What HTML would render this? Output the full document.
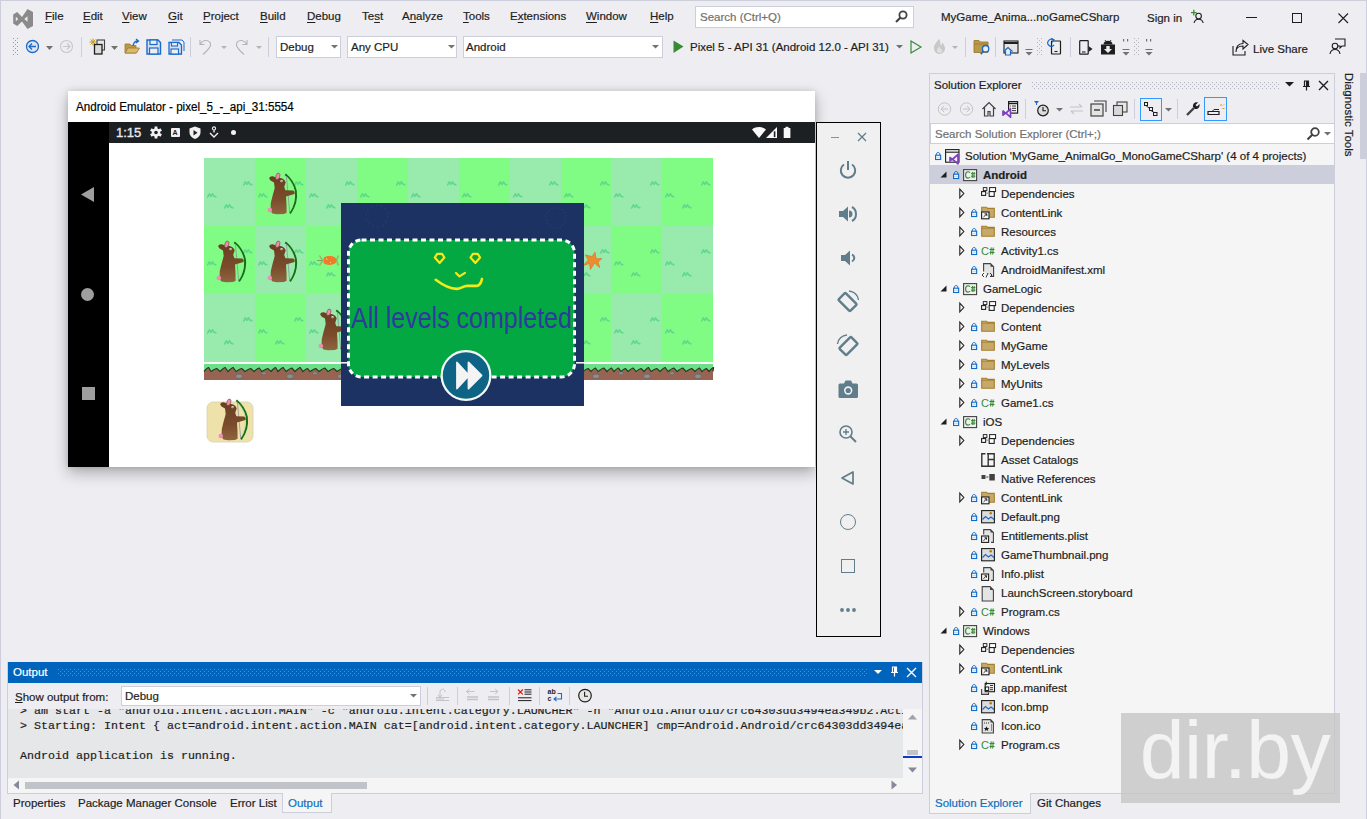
<!DOCTYPE html>
<html><head><meta charset="utf-8">
<style>
*{margin:0;padding:0;box-sizing:border-box}
html,body{width:1367px;height:819px;overflow:hidden;background:#EEEEF2;font-family:"Liberation Sans",sans-serif;font-size:11.5px;color:#1E1E1E}
.a{position:absolute}
.t{position:absolute;white-space:nowrap;line-height:14px;-webkit-text-stroke:0.2px currentColor}
svg{position:absolute;overflow:visible}
u{text-decoration:underline;text-decoration-thickness:1px;text-underline-offset:1.5px}
</style></head><body>
<div class="a" style="left:0;top:0;width:1367px;height:819px;border-left:1px solid #CCCEDB;border-top:1px solid #CCCEDB;border-right:1px solid #CCCEDB"></div>

<!-- MENU BAR -->
<div id="menubar">
<svg style="left:0;top:0" width="40" height="35"><path fill="#8A8A8A" fill-rule="evenodd" d="M13.2,14.6 L17.2,12.1 L22,17 L27.5,8.9 L33,12.1 L33,26 L27.5,29 L22,21.5 L17.2,26 L13.2,23.4 Z M15.8,16.8 L18.2,19 L15.8,21.2 Z M27.5,16.2 L24.3,19 L27.5,21.8 Z"/></svg>
<div class="t" style="left:45px;top:9px"><u>F</u>ile</div>
<div class="t" style="left:83px;top:9px"><u>E</u>dit</div>
<div class="t" style="left:122px;top:9px"><u>V</u>iew</div>
<div class="t" style="left:168px;top:9px"><u>G</u>it</div>
<div class="t" style="left:203px;top:9px"><u>P</u>roject</div>
<div class="t" style="left:260px;top:9px"><u>B</u>uild</div>
<div class="t" style="left:307px;top:9px"><u>D</u>ebug</div>
<div class="t" style="left:362px;top:9px">Te<u>s</u>t</div>
<div class="t" style="left:402px;top:9px">A<u>n</u>alyze</div>
<div class="t" style="left:463px;top:9px"><u>T</u>ools</div>
<div class="t" style="left:510px;top:9px">E<u>x</u>tensions</div>
<div class="t" style="left:586px;top:9px"><u>W</u>indow</div>
<div class="t" style="left:650px;top:9px"><u>H</u>elp</div>
<div class="a" style="left:695px;top:6px;width:219px;height:22px;background:#fff;border:1px solid #CCCEDB"></div>
<div class="t" style="left:700px;top:10px;color:#717171">Search (Ctrl+Q)</div>
<svg style="left:893px;top:9px" width="16" height="16"><circle cx="10" cy="6" r="3.6" fill="none" stroke="#424242" stroke-width="1.8"/><path d="M7.5,8.5 L3,13" stroke="#424242" stroke-width="2.2"/></svg>
<div class="t" style="left:941px;top:10px">MyGame_Anima...noGameCSharp</div>
<div class="t" style="left:1147px;top:11px">Sign in</div>
<svg style="left:1188px;top:6px" width="20" height="20"><path d="M3,6.6 H8.6 M5.8,3.8 V9.4" stroke="#388A34" stroke-width="1.3"/><circle cx="10.6" cy="10" r="2.8" fill="#EEEEF2" stroke="#1E1E1E" stroke-width="1.1"/><path d="M6,17 C6.6,14.3 8.4,13.2 10.6,13.2 C12.8,13.2 14.6,14.3 15.2,17" fill="none" stroke="#1E1E1E" stroke-width="1.1"/></svg>
<div class="a" style="left:1246px;top:17px;width:11px;height:1px;background:#1E1E1E"></div>
<div class="a" style="left:1292px;top:13px;width:10px;height:10px;border:1px solid #1E1E1E"></div>
<svg style="left:1338px;top:13px" width="11" height="11"><path d="M0.5,0.5 L10,10 M10,0.5 L0.5,10" stroke="#1E1E1E" stroke-width="1.1"/></svg>
</div>

<!-- TOOLBAR -->
<div id="toolbar">
<svg style="left:12px;top:37px" width="8" height="20"><g fill="#999"><rect x="1" y="1" width="1" height="1"/><rect x="5" y="1" width="1" height="1"/><rect x="3" y="3" width="1" height="1"/><rect x="1" y="5" width="1" height="1"/><rect x="5" y="5" width="1" height="1"/><rect x="3" y="7" width="1" height="1"/><rect x="1" y="9" width="1" height="1"/><rect x="5" y="9" width="1" height="1"/><rect x="3" y="11" width="1" height="1"/><rect x="1" y="13" width="1" height="1"/><rect x="5" y="13" width="1" height="1"/><rect x="3" y="15" width="1" height="1"/><rect x="1" y="17" width="1" height="1"/><rect x="5" y="17" width="1" height="1"/></g></svg>
<!-- back -->
<svg style="left:25px;top:39px" width="16" height="16"><circle cx="7.5" cy="7.5" r="6" fill="#DEE4F0" stroke="#1B6AC9" stroke-width="1.3"/><path d="M4,7.5 H11 M7,4.5 L4,7.5 L7,10.5" fill="none" stroke="#1B6AC9" stroke-width="1.3"/></svg>
<svg style="left:46px;top:46px" width="8" height="5"><path d="M0,0 H7 L3.5,4 Z" fill="#717171"/></svg>
<svg style="left:59px;top:39px" width="16" height="16"><circle cx="7.5" cy="7.5" r="6" fill="none" stroke="#C8C8C8" stroke-width="1.1"/><path d="M4,7.5 H11 M8,4.5 L11,7.5 L8,10.5" fill="none" stroke="#C8C8C8" stroke-width="1.1"/></svg>
<div class="a" style="left:81px;top:37px;width:1px;height:20px;background:#CCCEDB"></div>
<!-- new project -->
<svg style="left:89px;top:38px" width="18" height="18"><path d="M4,0.5 V7.5 M0.5,4 H7.5 M1.5,1.5 L6.5,6.5 M6.5,1.5 L1.5,6.5" stroke="#C69A1A" stroke-width="1"/><rect x="8" y="2" width="7.5" height="10" fill="#E8E8E8" stroke="#424242" stroke-width="1.1"/><rect x="5.5" y="6.5" width="7.5" height="9.5" fill="#DCDCDC" stroke="#1E1E1E" stroke-width="1.3"/></svg>
<svg style="left:111px;top:46px" width="8" height="5"><path d="M0,0 H7 L3.5,4 Z" fill="#717171"/></svg>
<!-- open -->
<svg style="left:124px;top:38px" width="17" height="17"><path d="M1,6 H6 L7,7.5 H12 V15 H1 Z" fill="#B99849" stroke="#9A7A2E" stroke-width="0.8"/><path d="M1,15 L4,10 H15.5 L12.5,15 Z" fill="#D9B96A" stroke="#9A7A2E" stroke-width="0.8"/><path d="M9,8 C9.5,4.5 11,3 14,3 M12,1 L14.5,3 L12,5" fill="none" stroke="#1B6AC9" stroke-width="1.3"/></svg>
<!-- save -->
<svg style="left:146px;top:39px" width="16" height="16"><path d="M1,1 H12 L14.5,3.5 V15 H1 Z" fill="#D8E1EE" stroke="#1B6AC9" stroke-width="1.4"/><rect x="4" y="1" width="7" height="4.5" fill="#EEEEF2" stroke="#1B6AC9" stroke-width="1.2"/><rect x="3.5" y="9" width="8.5" height="6" fill="#EEEEF2" stroke="#1B6AC9" stroke-width="1.2"/></svg>
<svg style="left:168px;top:39px" width="17" height="16"><path d="M4,1 H14 L16,3 V12" fill="none" stroke="#1B6AC9" stroke-width="1"/><path d="M1,3.5 H11 L13.5,6 V15 H1 Z" fill="#D8E1EE" stroke="#1B6AC9" stroke-width="1.3"/><rect x="3.5" y="3.5" width="6" height="3.5" fill="#EEEEF2" stroke="#1B6AC9" stroke-width="1.1"/><rect x="3" y="10" width="7.5" height="5" fill="#EEEEF2" stroke="#1B6AC9" stroke-width="1.1"/></svg>
<div class="a" style="left:190px;top:37px;width:1px;height:20px;background:#CCCEDB"></div>
<!-- undo/redo -->
<svg style="left:199px;top:39px" width="15" height="16"><path d="M1,1 V5.5 H5.5 M1.5,5 C3,2.5 5,1.5 7,1.5 C10,1.5 12,3.5 11.5,6.5 C11,8 9,11 4,15.5" fill="none" stroke="#B4B4B4" stroke-width="1.1"/></svg>
<svg style="left:221px;top:46px" width="6" height="4"><path d="M0,0 H6 L3,3 Z" fill="#B4B4B4"/></svg>
<svg style="left:234px;top:39px" width="15" height="16"><path d="M13,1 V5.5 H8.5 M12.5,5 C11,2.5 9,1.5 7,1.5 C4,1.5 2,3.5 2.5,6.5 C3,8 5,11 10,15.5" fill="none" stroke="#B4B4B4" stroke-width="1.1"/></svg>
<svg style="left:256px;top:46px" width="6" height="4"><path d="M0,0 H6 L3,3 Z" fill="#B4B4B4"/></svg>
<div class="a" style="left:268px;top:37px;width:1px;height:20px;background:#CCCEDB"></div>
<!-- combos -->
<div class="a" style="left:276px;top:36px;width:65px;height:22px;background:#fff;border:1px solid #CCCEDB"></div>
<div class="t" style="left:280px;top:40px">Debug</div>
<svg style="left:331px;top:45px" width="7" height="4"><path d="M0,0 H7 L3.5,3.5 Z" fill="#717171"/></svg>
<div class="a" style="left:347px;top:36px;width:110px;height:22px;background:#fff;border:1px solid #CCCEDB"></div>
<div class="t" style="left:351px;top:40px">Any CPU</div>
<svg style="left:448px;top:45px" width="7" height="4"><path d="M0,0 H7 L3.5,3.5 Z" fill="#717171"/></svg>
<div class="a" style="left:463px;top:36px;width:200px;height:22px;background:#fff;border:1px solid #CCCEDB"></div>
<div class="t" style="left:466px;top:40px">Android</div>
<svg style="left:652px;top:45px" width="7" height="4"><path d="M0,0 H7 L3.5,3.5 Z" fill="#717171"/></svg>
<svg style="left:673px;top:40px" width="11" height="14"><path d="M0.5,0.5 L10.5,6.5 L0.5,13 Z" fill="#388A34"/></svg>
<div class="t" style="left:690px;top:40px">Pixel 5 - API 31 (Android 12.0 - API 31)</div>
<svg style="left:896px;top:45px" width="7" height="4"><path d="M0,0 H7 L3.5,3.5 Z" fill="#717171"/></svg>
<svg style="left:910px;top:40px" width="12" height="14"><path d="M1,1 L11,7 L1,13 Z" fill="none" stroke="#388A34" stroke-width="1.2"/></svg>
<svg style="left:932px;top:38px" width="15" height="17"><path d="M7,1 C5,4 2,6 2,10 C2,13.5 4.5,16 7.5,16 C10.5,16 13,13.5 13,10.5 C13,7.5 11,6.5 11,4.5 C9.5,5.5 9.5,7 9,8 C8,6 9,3 7,1 Z" fill="#C8C8C8"/><path d="M5,12 C5,10 7,9 7.5,8.5 C8,11 10,11 10,13 C10,14.5 9,15 7.5,15 C6,15 5,14 5,12Z" fill="#E0E0E0"/></svg>
<svg style="left:952px;top:46px" width="6" height="4"><path d="M0,0 H6 L3,3 Z" fill="#B4B4B4"/></svg>
<div class="a" style="left:965px;top:37px;width:1px;height:20px;background:#CCCEDB"></div>
<svg style="left:973px;top:39px" width="18" height="18"><path d="M1,1.5 H6 L7.5,3 H15 V13.5 H1 Z" fill="#B99849" stroke="#9A7A2E" stroke-width="0.9"/><path d="M1,5 H15" stroke="#9A7A2E" stroke-width="0.8"/><circle cx="12.6" cy="9.7" r="3.2" fill="#EEEEF2" stroke="#1B6AC9" stroke-width="1.3"/><path d="M10.4,12 L7.8,15.3" stroke="#1B6AC9" stroke-width="1.6"/></svg>
<div class="a" style="left:995px;top:37px;width:1px;height:20px;background:#CCCEDB"></div>
<svg style="left:1003px;top:40px" width="17" height="16"><rect x="1" y="1" width="14" height="12" fill="#E4E4E4" stroke="#1E1E1E" stroke-width="1.1"/><path d="M1,3 H15" stroke="#1E1E1E" stroke-width="2"/><path d="M0.5,11.5 L5,7.5 L9.5,11.5" fill="none" stroke="#1B6AC9" stroke-width="1.3"/><path d="M2.5,10.5 V15 H7.5 V10.5" fill="#EEEEF2" stroke="#1B6AC9" stroke-width="1.2"/></svg>
<svg style="left:1025px;top:49px" width="8" height="8"><path d="M0.5,0.5 H7.5" stroke="#717171"/><path d="M0.5,3 H7.5 L4,6.5 Z" fill="#717171"/></svg>
<svg style="left:1036px;top:37px" width="8" height="20"><g fill="#B4B4B4"><rect x="1" y="1" width="1" height="1"/><rect x="5" y="1" width="1" height="1"/><rect x="3" y="3" width="1" height="1"/><rect x="1" y="5" width="1" height="1"/><rect x="5" y="5" width="1" height="1"/><rect x="3" y="7" width="1" height="1"/><rect x="1" y="9" width="1" height="1"/><rect x="5" y="9" width="1" height="1"/><rect x="3" y="11" width="1" height="1"/><rect x="1" y="13" width="1" height="1"/><rect x="5" y="13" width="1" height="1"/><rect x="3" y="15" width="1" height="1"/><rect x="1" y="17" width="1" height="1"/><rect x="5" y="17" width="1" height="1"/></g></svg>
<svg style="left:1047px;top:38px" width="16" height="18"><rect x="4.5" y="3" width="9" height="13" rx="0.5" fill="none" stroke="#1E1E1E" stroke-width="1.2"/><path d="M7.5,13.5 H10.5" stroke="#1E1E1E" stroke-width="1.1"/><path d="M6.5,2 A3.5,3.5 0 1 0 7,7" fill="none" stroke="#1B6AC9" stroke-width="1.2"/><path d="M4.2,0.3 L7.2,2 L5,4.5" fill="none" stroke="#1B6AC9" stroke-width="1.1"/></svg>
<div class="a" style="left:1070px;top:37px;width:1px;height:20px;background:#CCCEDB"></div>
<svg style="left:1079px;top:40px" width="16" height="16"><rect x="0.7" y="0.7" width="8.5" height="13.5" rx="0.5" fill="none" stroke="#1E1E1E" stroke-width="1.2"/><path d="M3,12 H6.5" stroke="#1E1E1E" stroke-width="1.1"/><path d="M9.5,6 L13.5,9 L9.5,12 Z" fill="#1E1E1E"/></svg>
<svg style="left:1100px;top:39px" width="17" height="17"><path d="M5,1 L6,2.5 M11,1 L10,2.5" stroke="#1E1E1E" stroke-width="0.9"/><path d="M3.5,5.5 C3.5,3 5.5,1.8 8,1.8 C10.5,1.8 12.5,3 12.5,5.5 Z" fill="#1E1E1E"/><path d="M1,5.5 H15 V15.5 H1 Z" fill="#1E1E1E"/><path d="M6.3,7 H9.7 V10 H12 L8,14 L4,10 H6.3 Z" fill="#EEEEF2"/></svg>
<svg style="left:1122px;top:38px" width="9" height="19"><g fill="#717171"><rect x="1" y="1" width="1.2" height="2.5"/><rect x="5" y="1" width="1.2" height="2.5"/></g><path d="M0.5,11.5 H7.5" stroke="#717171"/><path d="M0.5,14 H7.5 L4,17.5 Z" fill="#717171"/></svg>
<svg style="left:1133px;top:37px" width="8" height="20"><g fill="#B4B4B4"><rect x="1" y="1" width="1" height="1"/><rect x="5" y="1" width="1" height="1"/><rect x="3" y="3" width="1" height="1"/><rect x="1" y="5" width="1" height="1"/><rect x="5" y="5" width="1" height="1"/><rect x="3" y="7" width="1" height="1"/><rect x="1" y="9" width="1" height="1"/><rect x="5" y="9" width="1" height="1"/><rect x="3" y="11" width="1" height="1"/><rect x="1" y="13" width="1" height="1"/><rect x="5" y="13" width="1" height="1"/><rect x="3" y="15" width="1" height="1"/><rect x="1" y="17" width="1" height="1"/><rect x="5" y="17" width="1" height="1"/></g></svg>
<svg style="left:1145px;top:38px" width="9" height="19"><g fill="#717171"><rect x="1" y="1" width="1.2" height="2.5"/><rect x="5" y="1" width="1.2" height="2.5"/></g><path d="M0.5,11.5 H7.5" stroke="#717171"/><path d="M0.5,14 H7.5 L4,17.5 Z" fill="#717171"/></svg>
<!-- live share -->
<svg style="left:1232px;top:40px" width="17" height="16"><path d="M1,6 V15 H13 V11" fill="none" stroke="#1E1E1E" stroke-width="1.1"/><path d="M4,12 C4,8 7,6 11,6 V9 L16,4.5 L11,0.5 V3.5 C6,3.5 4,7 4,12 Z" fill="none" stroke="#1E1E1E" stroke-width="1.1"/></svg>
<div class="t" style="left:1253px;top:42px">Live Share</div>
<svg style="left:1329px;top:38px" width="18" height="18"><path d="M6,1 H16 V8 H13 L11,10 V8 H9" fill="none" stroke="#1E1E1E" stroke-width="1.1"/><circle cx="6" cy="8" r="2.8" fill="#EEEEF2" stroke="#1E1E1E" stroke-width="1.1"/><path d="M1,16 C1.5,13 3,11.5 6,11.5 C9,11.5 10.5,13 11,16" fill="none" stroke="#1E1E1E" stroke-width="1.1"/></svg>
</div>

<!-- EMULATOR -->
<div id="emu">
<div class="a" style="left:68px;top:91px;width:747px;height:376px;background:#fff;box-shadow:0 6px 14px rgba(0,0,0,0.28), 0 0 6px rgba(0,0,0,0.12)"></div>
<div class="t" style="left:76px;top:100px;color:#000;font-size:12.5px;transform-origin:0 0;transform:scaleX(0.93)">Android Emulator - pixel_5_-_api_31:5554</div>
<div class="a" style="left:68px;top:122px;width:747px;height:345px;background:#000"></div>
<div class="a" style="left:109px;top:122px;width:706px;height:21px;background:#1D2023"></div>
<div class="a" style="left:109px;top:143px;width:706px;height:324px;background:#fff"></div>
<svg style="left:80px;top:186px" width="16" height="18"><path d="M1,8.5 L14,1 V16 Z" fill="#9E9E9E"/></svg>
<div class="a" style="left:81px;top:288px;width:13px;height:13px;border-radius:50%;background:#9E9E9E"></div>
<div class="a" style="left:82px;top:387px;width:13px;height:13px;background:#9E9E9E"></div>
<div class="t" style="left:116px;top:126px;color:#E8EAED;font-size:13px;-webkit-text-stroke:0.35px #E8EAED">1:15</div>
<svg style="left:149px;top:126px" width="14" height="14"><g transform="translate(7,6.5)"><circle r="4.2" fill="#F1F1F1"/><g fill="#F1F1F1"><rect x="-1.4" y="-6" width="2.8" height="12"/><rect x="-1.4" y="-6" width="2.8" height="12" transform="rotate(60)"/><rect x="-1.4" y="-6" width="2.8" height="12" transform="rotate(120)"/></g><circle r="1.8" fill="#1D2023"/></g></svg>
<div class="a" style="left:171px;top:128px;width:9px;height:9px;background:#F1F1F1;border-radius:1px"></div>
<div class="t" style="left:172.5px;top:128px;font-size:7px;line-height:9px;color:#1D2023;font-weight:bold;-webkit-text-stroke:0">A</div>
<svg style="left:188px;top:126px" width="14" height="14"><path d="M7,0.5 L12.5,2.5 V6.5 C12.5,9.5 10,12 7,13 C4,12 1.5,9.5 1.5,6.5 V2.5 Z" fill="#F1F1F1"/><path d="M5.5,4 L9.5,6.8 L5.5,9.5 Z" fill="#1D2023"/></svg>
<svg style="left:208px;top:126px" width="12" height="14"><circle cx="6" cy="2.5" r="1.6" fill="none" stroke="#F1F1F1" stroke-width="1.1"/><path d="M6,4.5 V6.5 M2,7 L6,11 L10,7" fill="none" stroke="#F1F1F1" stroke-width="1.4"/></svg>
<div class="a" style="left:231px;top:130px;width:5px;height:5px;border-radius:50%;background:#F1F1F1"></div>
<svg style="left:750px;top:126px" width="44" height="15"><path d="M2,3.5 C6,0.3 12,0.3 16,3.5 L9,12 Z" fill="#F8F8F8"/><path d="M16,12 L27,1 V12 Z" fill="#F8F8F8"/><rect x="23.8" y="5.3" width="1.6" height="5.8" fill="#1D2023"/><rect x="33.7" y="2" width="6.7" height="10" rx="0.6" fill="#F8F8F8"/><rect x="35.5" y="0.8" width="3" height="1.6" fill="#F8F8F8"/></svg>
<!--GAME-->
<svg style="left:0;top:0" width="1367" height="819">
<defs>
<g id="tuft"><path d="M0.7,4 L2.3,0.8 L3.8,3.3 L5.3,0.8 L6.8,3 L8.8,3.8" fill="none" stroke="#5FD98B" stroke-width="1.6" stroke-linecap="round" stroke-linejoin="round"/></g>
<linearGradient id="fur" x1="0" y1="0" x2="0" y2="1"><stop offset="0" stop-color="#6A3E20"/><stop offset="0.6" stop-color="#7A4C2C"/><stop offset="1" stop-color="#8F6440"/></linearGradient>
<g id="rab">
<path d="M30.3,13.2 C36,18 39.5,24 40.8,30 C41.8,37 39.5,46 35,52.4" fill="none" stroke="#137018" stroke-width="2"/><path d="M31.5,15.5 C36,20 38.5,25 39.3,30.5 C40,37 38.5,45 35,50.5" fill="none" stroke="#A8E8A0" stroke-width="0.7"/>
<path d="M31.4,15 L34.7,51.7" stroke="#8A8A9A" stroke-width="0.7"/>
<path d="M14.2,17.5 C14.5,15.5 16.5,15 18.5,15.5 L21,16.5 L24.5,16.8 C27,17 29.5,18.5 30.7,21.2 L29.2,26 L30.5,29.3 L38,29.5 C39.5,29.8 40,31.5 39.5,33 L31,35.5 L31.5,44 L31.6,51.7 L29,53.1 L22,53.3 L17.5,52.5 L15.5,50 L15.8,42 L17.5,35 L19.7,27 L19,21.5 L15.5,19.5 Z" fill="url(#fur)"/>
<ellipse cx="22.8" cy="15.3" rx="1.9" ry="3.4" transform="rotate(18 22.8 15.3)" fill="#EE8DB5" stroke="#7A4526" stroke-width="0.6"/>
<circle cx="14.8" cy="49" r="2.3" fill="#EE8DB5"/>
<circle cx="26.6" cy="20.1" r="1.2" fill="#EEE"/><circle cx="26.9" cy="20.3" r="0.5" fill="#333"/>
</g>
</defs>
<rect x="204" y="158" width="51" height="68" fill="#98EAAD"/>
<rect x="255" y="158" width="51" height="68" fill="#80FB84"/>
<rect x="306" y="158" width="51" height="68" fill="#98EAAD"/>
<rect x="357" y="158" width="51" height="68" fill="#80FB84"/>
<rect x="408" y="158" width="51" height="68" fill="#98EAAD"/>
<rect x="459" y="158" width="51" height="68" fill="#80FB84"/>
<rect x="510" y="158" width="51" height="68" fill="#98EAAD"/>
<rect x="561" y="158" width="50" height="68" fill="#80FB84"/>
<rect x="611" y="158" width="51" height="68" fill="#98EAAD"/>
<rect x="662" y="158" width="51" height="68" fill="#80FB84"/>
<rect x="204" y="226" width="51" height="68" fill="#80FB84"/>
<rect x="255" y="226" width="51" height="68" fill="#98EAAD"/>
<rect x="306" y="226" width="51" height="68" fill="#80FB84"/>
<rect x="357" y="226" width="51" height="68" fill="#98EAAD"/>
<rect x="408" y="226" width="51" height="68" fill="#80FB84"/>
<rect x="459" y="226" width="51" height="68" fill="#98EAAD"/>
<rect x="510" y="226" width="51" height="68" fill="#80FB84"/>
<rect x="561" y="226" width="50" height="68" fill="#98EAAD"/>
<rect x="611" y="226" width="51" height="68" fill="#80FB84"/>
<rect x="662" y="226" width="51" height="68" fill="#98EAAD"/>
<rect x="204" y="294" width="51" height="68" fill="#98EAAD"/>
<rect x="255" y="294" width="51" height="68" fill="#80FB84"/>
<rect x="306" y="294" width="51" height="68" fill="#98EAAD"/>
<rect x="357" y="294" width="51" height="68" fill="#80FB84"/>
<rect x="408" y="294" width="51" height="68" fill="#98EAAD"/>
<rect x="459" y="294" width="51" height="68" fill="#80FB84"/>
<rect x="510" y="294" width="51" height="68" fill="#98EAAD"/>
<rect x="561" y="294" width="50" height="68" fill="#80FB84"/>
<rect x="611" y="294" width="51" height="68" fill="#98EAAD"/>
<rect x="662" y="294" width="51" height="68" fill="#80FB84"/>
<use href="#tuft" x="243" y="181"/><use href="#tuft" x="207" y="193"/><use href="#tuft" x="224" y="204"/>
<use href="#tuft" x="294" y="181"/><use href="#tuft" x="258" y="193"/><use href="#tuft" x="275" y="204"/>
<use href="#tuft" x="345" y="181"/><use href="#tuft" x="309" y="193"/><use href="#tuft" x="326" y="204"/>
<use href="#tuft" x="396" y="181"/><use href="#tuft" x="360" y="193"/><use href="#tuft" x="377" y="204"/>
<use href="#tuft" x="447" y="181"/><use href="#tuft" x="411" y="193"/><use href="#tuft" x="428" y="204"/>
<use href="#tuft" x="498" y="181"/><use href="#tuft" x="462" y="193"/><use href="#tuft" x="479" y="204"/>
<use href="#tuft" x="549" y="181"/><use href="#tuft" x="513" y="193"/><use href="#tuft" x="530" y="204"/>
<use href="#tuft" x="600" y="181"/><use href="#tuft" x="564" y="193"/><use href="#tuft" x="581" y="204"/>
<use href="#tuft" x="650" y="181"/><use href="#tuft" x="614" y="193"/><use href="#tuft" x="631" y="204"/>
<use href="#tuft" x="701" y="181"/><use href="#tuft" x="665" y="193"/><use href="#tuft" x="682" y="204"/>
<use href="#tuft" x="243" y="249"/><use href="#tuft" x="207" y="261"/><use href="#tuft" x="224" y="272"/>
<use href="#tuft" x="294" y="249"/><use href="#tuft" x="258" y="261"/><use href="#tuft" x="275" y="272"/>
<use href="#tuft" x="345" y="249"/><use href="#tuft" x="309" y="261"/><use href="#tuft" x="326" y="272"/>
<use href="#tuft" x="396" y="249"/><use href="#tuft" x="360" y="261"/><use href="#tuft" x="377" y="272"/>
<use href="#tuft" x="447" y="249"/><use href="#tuft" x="411" y="261"/><use href="#tuft" x="428" y="272"/>
<use href="#tuft" x="498" y="249"/><use href="#tuft" x="462" y="261"/><use href="#tuft" x="479" y="272"/>
<use href="#tuft" x="549" y="249"/><use href="#tuft" x="513" y="261"/><use href="#tuft" x="530" y="272"/>
<use href="#tuft" x="600" y="249"/><use href="#tuft" x="564" y="261"/><use href="#tuft" x="581" y="272"/>
<use href="#tuft" x="650" y="249"/><use href="#tuft" x="614" y="261"/><use href="#tuft" x="631" y="272"/>
<use href="#tuft" x="701" y="249"/><use href="#tuft" x="665" y="261"/><use href="#tuft" x="682" y="272"/>
<use href="#tuft" x="243" y="317"/><use href="#tuft" x="207" y="329"/><use href="#tuft" x="224" y="340"/>
<use href="#tuft" x="294" y="317"/><use href="#tuft" x="258" y="329"/><use href="#tuft" x="275" y="340"/>
<use href="#tuft" x="345" y="317"/><use href="#tuft" x="309" y="329"/><use href="#tuft" x="326" y="340"/>
<use href="#tuft" x="396" y="317"/><use href="#tuft" x="360" y="329"/><use href="#tuft" x="377" y="340"/>
<use href="#tuft" x="447" y="317"/><use href="#tuft" x="411" y="329"/><use href="#tuft" x="428" y="340"/>
<use href="#tuft" x="498" y="317"/><use href="#tuft" x="462" y="329"/><use href="#tuft" x="479" y="340"/>
<use href="#tuft" x="549" y="317"/><use href="#tuft" x="513" y="329"/><use href="#tuft" x="530" y="340"/>
<use href="#tuft" x="600" y="317"/><use href="#tuft" x="564" y="329"/><use href="#tuft" x="581" y="340"/>
<use href="#tuft" x="650" y="317"/><use href="#tuft" x="614" y="329"/><use href="#tuft" x="631" y="340"/>
<use href="#tuft" x="701" y="317"/><use href="#tuft" x="665" y="329"/><use href="#tuft" x="682" y="340"/>
<rect x="204" y="362" width="509" height="2" fill="#FAFAFA"/>
<rect x="204" y="364" width="509" height="9" fill="#6CDF8B"/>
<path d="M204,371.5 Q207.5,367.5 208.6,367.5 L211.0,371.5 Q215.5,368.5 216.8,368.5 L220.0,371.5 Q224.0,367.5 225.2,367.5 L228.0,371.5 Q232.0,367.5 233.2,367.5 L236.0,371.5 Q240.5,368.5 241.8,368.5 L245.0,371.5 Q249.5,368.5 250.8,368.5 L254.0,371.5 Q258.0,368.0 259.2,368.0 L262.0,371.5 Q266.5,368.5 267.9,368.5 L271.0,371.5 Q274.5,367.5 275.6,367.5 L278.0,371.5 Q282.0,367.5 283.2,367.5 L286.0,371.5 Q290.5,368.0 291.9,368.0 L295.0,371.5 Q299.0,367.5 300.2,367.5 L303.0,371.5 Q306.5,368.5 307.6,368.5 L310.0,371.5 Q314.5,368.5 315.9,368.5 L319.0,371.5 Q323.5,368.0 324.9,368.0 L328.0,371.5 Q332.5,368.5 333.9,368.5 L337.0,371.5 Q341.5,368.5 342.9,368.5 L346.0,371.5 Q349.5,367.5 350.6,367.5 L353.0,371.5 Q356.5,368.0 357.6,368.0 L360.0,371.5 Q363.5,368.0 364.6,368.0 L367.0,371.5 Q371.0,367.5 372.2,367.5 L375.0,371.5 Q379.5,368.0 380.9,368.0 L384.0,371.5 Q388.5,368.0 389.9,368.0 L393.0,371.5 Q397.0,367.5 398.2,367.5 L401.0,371.5 Q405.5,368.0 406.9,368.0 L410.0,371.5 Q413.5,368.0 414.6,368.0 L417.0,371.5 Q420.5,368.5 421.6,368.5 L424.0,371.5 Q427.5,368.0 428.6,368.0 L431.0,371.5 Q434.5,368.0 435.6,368.0 L438.0,371.5 Q442.5,368.0 443.9,368.0 L447.0,371.5 Q451.5,368.0 452.9,368.0 L456.0,371.5 Q460.0,367.5 461.2,367.5 L464.0,371.5 Q468.0,367.5 469.2,367.5 L472.0,371.5 Q476.0,367.5 477.2,367.5 L480.0,371.5 Q484.5,368.0 485.9,368.0 L489.0,371.5 Q493.5,368.5 494.9,368.5 L498.0,371.5 Q502.0,367.5 503.2,367.5 L506.0,371.5 Q509.5,368.0 510.6,368.0 L513.0,371.5 Q517.5,367.5 518.9,367.5 L522.0,371.5 Q526.5,368.5 527.9,368.5 L531.0,371.5 Q535.5,368.0 536.9,368.0 L540.0,371.5 Q544.5,367.5 545.9,367.5 L549.0,371.5 Q553.5,368.5 554.9,368.5 L558.0,371.5 Q562.5,367.5 563.9,367.5 L567.0,371.5 Q570.5,367.5 571.5,367.5 L574.0,371.5 Q578.5,368.0 579.9,368.0 L583.0,371.5 Q587.0,368.5 588.2,368.5 L591.0,371.5 Q594.5,368.0 595.5,368.0 L598.0,371.5 Q602.5,368.0 603.9,368.0 L607.0,371.5 Q610.5,368.0 611.5,368.0 L614.0,371.5 Q617.5,368.0 618.5,368.0 L621.0,371.5 Q624.5,368.5 625.5,368.5 L628.0,371.5 Q632.0,368.0 633.2,368.0 L636.0,371.5 Q640.0,368.5 641.2,368.5 L644.0,371.5 Q647.5,367.5 648.5,367.5 L651.0,371.5 Q655.5,368.5 656.9,368.5 L660.0,371.5 Q664.0,367.5 665.2,367.5 L668.0,371.5 Q672.5,368.0 673.9,368.0 L677.0,371.5 Q681.5,368.0 682.9,368.0 L686.0,371.5 Q690.5,368.5 691.9,368.5 L695.0,371.5 Q698.5,368.0 699.5,368.0 L702.0,371.5 Q705.5,368.5 706.5,368.5 L709.0,371.5 Q712.5,367.5 713.5,367.5 L713.0,371.5  L713,380 L204,380 Z" fill="#976353"/>
<path d="M204,371.5 Q207.5,367.5 208.6,367.5 L211.0,371.5 Q215.5,368.5 216.8,368.5 L220.0,371.5 Q224.0,367.5 225.2,367.5 L228.0,371.5 Q232.0,367.5 233.2,367.5 L236.0,371.5 Q240.5,368.5 241.8,368.5 L245.0,371.5 Q249.5,368.5 250.8,368.5 L254.0,371.5 Q258.0,368.0 259.2,368.0 L262.0,371.5 Q266.5,368.5 267.9,368.5 L271.0,371.5 Q274.5,367.5 275.6,367.5 L278.0,371.5 Q282.0,367.5 283.2,367.5 L286.0,371.5 Q290.5,368.0 291.9,368.0 L295.0,371.5 Q299.0,367.5 300.2,367.5 L303.0,371.5 Q306.5,368.5 307.6,368.5 L310.0,371.5 Q314.5,368.5 315.9,368.5 L319.0,371.5 Q323.5,368.0 324.9,368.0 L328.0,371.5 Q332.5,368.5 333.9,368.5 L337.0,371.5 Q341.5,368.5 342.9,368.5 L346.0,371.5 Q349.5,367.5 350.6,367.5 L353.0,371.5 Q356.5,368.0 357.6,368.0 L360.0,371.5 Q363.5,368.0 364.6,368.0 L367.0,371.5 Q371.0,367.5 372.2,367.5 L375.0,371.5 Q379.5,368.0 380.9,368.0 L384.0,371.5 Q388.5,368.0 389.9,368.0 L393.0,371.5 Q397.0,367.5 398.2,367.5 L401.0,371.5 Q405.5,368.0 406.9,368.0 L410.0,371.5 Q413.5,368.0 414.6,368.0 L417.0,371.5 Q420.5,368.5 421.6,368.5 L424.0,371.5 Q427.5,368.0 428.6,368.0 L431.0,371.5 Q434.5,368.0 435.6,368.0 L438.0,371.5 Q442.5,368.0 443.9,368.0 L447.0,371.5 Q451.5,368.0 452.9,368.0 L456.0,371.5 Q460.0,367.5 461.2,367.5 L464.0,371.5 Q468.0,367.5 469.2,367.5 L472.0,371.5 Q476.0,367.5 477.2,367.5 L480.0,371.5 Q484.5,368.0 485.9,368.0 L489.0,371.5 Q493.5,368.5 494.9,368.5 L498.0,371.5 Q502.0,367.5 503.2,367.5 L506.0,371.5 Q509.5,368.0 510.6,368.0 L513.0,371.5 Q517.5,367.5 518.9,367.5 L522.0,371.5 Q526.5,368.5 527.9,368.5 L531.0,371.5 Q535.5,368.0 536.9,368.0 L540.0,371.5 Q544.5,367.5 545.9,367.5 L549.0,371.5 Q553.5,368.5 554.9,368.5 L558.0,371.5 Q562.5,367.5 563.9,367.5 L567.0,371.5 Q570.5,367.5 571.5,367.5 L574.0,371.5 Q578.5,368.0 579.9,368.0 L583.0,371.5 Q587.0,368.5 588.2,368.5 L591.0,371.5 Q594.5,368.0 595.5,368.0 L598.0,371.5 Q602.5,368.0 603.9,368.0 L607.0,371.5 Q610.5,368.0 611.5,368.0 L614.0,371.5 Q617.5,368.0 618.5,368.0 L621.0,371.5 Q624.5,368.5 625.5,368.5 L628.0,371.5 Q632.0,368.0 633.2,368.0 L636.0,371.5 Q640.0,368.5 641.2,368.5 L644.0,371.5 Q647.5,367.5 648.5,367.5 L651.0,371.5 Q655.5,368.5 656.9,368.5 L660.0,371.5 Q664.0,367.5 665.2,367.5 L668.0,371.5 Q672.5,368.0 673.9,368.0 L677.0,371.5 Q681.5,368.0 682.9,368.0 L686.0,371.5 Q690.5,368.5 691.9,368.5 L695.0,371.5 Q698.5,368.0 699.5,368.0 L702.0,371.5 Q705.5,368.5 706.5,368.5 L709.0,371.5 Q712.5,367.5 713.5,367.5 L713.0,371.5 " fill="none" stroke="#1F3D1A" stroke-width="1.2"/>
<ellipse cx="239" cy="376.3" rx="3.4" ry="2.3" fill="#8E8E8E" stroke="#5E5E5E" stroke-width="0.6"/>
<ellipse cx="290" cy="376.3" rx="3.4" ry="2.3" fill="#8E8E8E" stroke="#5E5E5E" stroke-width="0.6"/>
<ellipse cx="264" cy="373.3" rx="2.3" ry="1.5" fill="#8E8E8E" stroke="#5E5E5E" stroke-width="0.5"/>
<ellipse cx="341" cy="376.3" rx="3.4" ry="2.3" fill="#8E8E8E" stroke="#5E5E5E" stroke-width="0.6"/>
<ellipse cx="315" cy="373.3" rx="2.3" ry="1.5" fill="#8E8E8E" stroke="#5E5E5E" stroke-width="0.5"/>
<ellipse cx="392" cy="376.3" rx="3.4" ry="2.3" fill="#8E8E8E" stroke="#5E5E5E" stroke-width="0.6"/>
<ellipse cx="366" cy="373.3" rx="2.3" ry="1.5" fill="#8E8E8E" stroke="#5E5E5E" stroke-width="0.5"/>
<ellipse cx="443" cy="376.3" rx="3.4" ry="2.3" fill="#8E8E8E" stroke="#5E5E5E" stroke-width="0.6"/>
<ellipse cx="417" cy="373.3" rx="2.3" ry="1.5" fill="#8E8E8E" stroke="#5E5E5E" stroke-width="0.5"/>
<ellipse cx="494" cy="376.3" rx="3.4" ry="2.3" fill="#8E8E8E" stroke="#5E5E5E" stroke-width="0.6"/>
<ellipse cx="468" cy="373.3" rx="2.3" ry="1.5" fill="#8E8E8E" stroke="#5E5E5E" stroke-width="0.5"/>
<ellipse cx="545" cy="376.3" rx="3.4" ry="2.3" fill="#8E8E8E" stroke="#5E5E5E" stroke-width="0.6"/>
<ellipse cx="519" cy="373.3" rx="2.3" ry="1.5" fill="#8E8E8E" stroke="#5E5E5E" stroke-width="0.5"/>
<ellipse cx="596" cy="376.3" rx="3.4" ry="2.3" fill="#8E8E8E" stroke="#5E5E5E" stroke-width="0.6"/>
<ellipse cx="570" cy="373.3" rx="2.3" ry="1.5" fill="#8E8E8E" stroke="#5E5E5E" stroke-width="0.5"/>
<ellipse cx="647" cy="376.3" rx="3.4" ry="2.3" fill="#8E8E8E" stroke="#5E5E5E" stroke-width="0.6"/>
<ellipse cx="621" cy="373.3" rx="2.3" ry="1.5" fill="#8E8E8E" stroke="#5E5E5E" stroke-width="0.5"/>
<ellipse cx="698" cy="376.3" rx="3.4" ry="2.3" fill="#8E8E8E" stroke="#5E5E5E" stroke-width="0.6"/>
<ellipse cx="672" cy="373.3" rx="2.3" ry="1.5" fill="#8E8E8E" stroke="#5E5E5E" stroke-width="0.5"/>
<use href="#rab" x="255" y="161"/>
<use href="#rab" x="204" y="229"/>
<use href="#rab" x="255" y="229"/>
<use href="#rab" x="306" y="297"/>
<path d="M319.5,255.5 L322.5,260.5 L319.5,265.5 M338.5,255.5 L336.5,260.5 L338.5,265.5" fill="none" stroke="#98B060" stroke-width="1.4"/><path d="M317,260.5 H323" stroke="#8A9A70" stroke-width="1"/><path d="M323.5,258 C326,255.5 332,255.5 335,257.5 C337,259 337,262 335,263.5 C332,265.5 326,265.5 323.5,263 Z" fill="#F07C28"/><path d="M326,258.5 L327.5,259.5 M330,262 L331,263" stroke="#FAD0A0" stroke-width="0.9"/>
<path d="M595,252.2 L596,258.8 L601.9,258.6 L598,262 L599.7,267.6 L594.5,263 L590.4,269.5 L589.6,263.4 L583,265.6 L588.4,260 L585.3,254.9 L592.1,256.6 Z" fill="#EE8D2E" stroke="#E07A28" stroke-width="0.8" stroke-linejoin="round"/>
<rect x="341" y="203" width="243" height="203" fill="#1B3263"/>
<circle cx="377" cy="216" r="11" fill="none" stroke="#213A69" stroke-width="2" stroke-dasharray="2 3"/>
<circle cx="556" cy="218" r="10" fill="none" stroke="#213A69" stroke-width="2.5" stroke-dasharray="1.5 2"/>
<rect x="348.5" y="240" width="226" height="137" rx="13" fill="#04A843" stroke="#FFFFFF" stroke-width="3" stroke-dasharray="5 3.5"/>
<path d="M434.8,257.5 L437.2,253.8 L442,253.8 L444.4,257.5 L439.6,263 Z M470.5,257.5 L472.9,253.8 L477.7,253.8 L480.1,257.5 L475.3,263 Z" fill="none" stroke="#F2EA1A" stroke-width="2.2" stroke-linejoin="round"/>
<path d="M456,273 L459.5,276.4 L465,272.8" fill="none" stroke="#F2EA1A" stroke-width="2.2" stroke-linecap="round" stroke-linejoin="round"/>
<path d="M435.7,279.8 C442,284.5 449,289 456.7,288.9 C461,288.8 463,286 467,285.9 L477,285.9 C480,285.5 481.5,281 482,278.9" fill="none" stroke="#F2EA1A" stroke-width="2.6" stroke-linecap="round"/>
<rect x="341" y="362" width="7" height="1.6" fill="#F0F0F0"/><rect x="576" y="362" width="8" height="1.6" fill="#F0F0F0"/>
<circle cx="466" cy="375.5" r="24.3" fill="#0F6384" stroke="#F2FAF6" stroke-width="2.2"/>
<path d="M457,362.5 L469,375.5 L457,388.5 Z M468.5,362.5 L481.5,375.5 L468.5,388.5 Z" fill="#F4F4F4" stroke="#F4F4F4" stroke-width="1.8" stroke-linejoin="round"/>
<rect x="207" y="402" width="46" height="40" rx="6" fill="#EEE1AA" stroke="#D8D0B0" stroke-width="0.8"/>
<use href="#rab" transform="translate(206,387)"/>
</svg>
<div class="t" style="left:351px;top:302px;font-size:29px;line-height:32px;color:#2E3A9E;transform-origin:0 0;transform:scaleX(0.862);-webkit-text-stroke:0">All levels completed</div>
<!--/GAME-->
<!--SIDEPANEL-->
<div class="a" style="left:816px;top:122px;width:65px;height:515px;background:#F0F0F0;border:1px solid #000"></div>
<div class="a" style="left:831px;top:136.5px;width:8px;height:1.3px;background:#7D96A2"></div>
<svg style="left:857px;top:132px" width="10" height="10"><path d="M1,1 L9,9 M9,1 L1,9" stroke="#607D8B" stroke-width="1.3"/></svg>
<svg style="left:838px;top:160px" width="20" height="20"><path d="M6,4.5 A7.2,7.2 0 1 0 14,4.5" fill="none" stroke="#607D8B" stroke-width="2"/><path d="M10,1 V10" stroke="#607D8B" stroke-width="2"/></svg>
<svg style="left:838px;top:204px" width="20" height="20"><path d="M1,7 H5 L10,2.5 V17.5 L5,13 H1 Z" fill="#607D8B"/><path d="M11,6.5 A3.5,3.5 0 0 1 11,13.5 Z" fill="#607D8B"/><path d="M14,3 C16.8,4.5 18,7 18,10 C18,13 16.8,15.5 14,17" fill="none" stroke="#607D8B" stroke-width="2"/></svg>
<svg style="left:839px;top:248px" width="20" height="20"><path d="M2,7 H6 L11,2.5 V17.5 L6,13 H2 Z" fill="#607D8B"/><path d="M13,6.5 C14.8,7.5 15.3,8.7 15.3,10 C15.3,11.3 14.8,12.5 13,13.5" fill="none" stroke="#607D8B" stroke-width="2"/></svg>
<svg style="left:836px;top:290px" width="24" height="24"><rect x="6.5" y="3.8" width="10" height="16.5" transform="rotate(-45 11.5 12)" fill="none" stroke="#607D8B" stroke-width="2.4" rx="1"/><path d="M13,1 C18,1.5 22,5 22.5,10" fill="none" stroke="#607D8B" stroke-width="1.4"/></svg>
<svg style="left:836px;top:334px" width="24" height="24"><rect x="7.5" y="3.8" width="10" height="16.5" transform="rotate(45 12.5 12)" fill="none" stroke="#607D8B" stroke-width="2.4" rx="1"/><path d="M1.5,10 C2,5 6,1.5 11,1" fill="none" stroke="#607D8B" stroke-width="1.4"/></svg>
<svg style="left:838px;top:379px" width="21" height="20"><path d="M2,4.5 H6 L7.5,1.5 H13 L14.5,4.5 H18.5 Q20,4.5 20,6 V17.5 Q20,19 18.5,19 H2 Q0.5,19 0.5,17.5 V6 Q0.5,4.5 2,4.5 Z" fill="#607D8B"/><circle cx="10.2" cy="11.5" r="4.2" fill="#F0F0F0"/><circle cx="10.2" cy="11.5" r="2.6" fill="#607D8B"/></svg>
<svg style="left:838px;top:424px" width="20" height="20"><circle cx="8" cy="8" r="6" fill="none" stroke="#607D8B" stroke-width="1.6"/><path d="M8,5 V11 M5,8 H11" stroke="#607D8B" stroke-width="1.3"/><path d="M12.5,12.5 L18,18" stroke="#607D8B" stroke-width="2"/></svg>
<svg style="left:840px;top:470px" width="16" height="16"><path d="M2,8 L13,2 V14 Z" fill="none" stroke="#607D8B" stroke-width="1.7" stroke-linejoin="round"/></svg>
<div class="a" style="left:840px;top:514px;width:16px;height:16px;border-radius:50%;border:1.7px solid #607D8B"></div>
<div class="a" style="left:841px;top:559px;width:14px;height:14px;border:1.7px solid #607D8B"></div>
<svg style="left:838px;top:606px" width="20" height="8"><circle cx="4" cy="4" r="1.9" fill="#607D8B"/><circle cx="10" cy="4" r="1.9" fill="#607D8B"/><circle cx="16" cy="4" r="1.9" fill="#607D8B"/></svg>
<!--/SIDEPANEL-->
</div>

<!-- SOLUTION EXPLORER -->
<div id="se">
<div class="a" style="left:929px;top:73px;width:406px;height:720px;background:#F5F5F5;border:1px solid #CCCEDB;border-bottom:none"></div>
<div class="a" style="left:930px;top:74px;width:404px;height:49px;background:#EEEEF2"></div>
<div class="t" style="left:934px;top:78px">Solution Explorer</div>
<svg style="left:1032px;top:82px" width="247" height="7"><defs><pattern id="gp2" width="4" height="4" patternUnits="userSpaceOnUse"><rect x="0" y="0" width="1" height="1" fill="#B0B2C0"/><rect x="2" y="2" width="1" height="1" fill="#B0B2C0"/></pattern></defs><rect width="247" height="7" fill="url(#gp2)"/></svg>
<svg style="left:1285px;top:82px" width="10" height="5"><path d="M0,0 H9 L4.5,4.5 Z" fill="#1E1E1E"/></svg>
<svg style="left:1302px;top:80px" width="9" height="11"><path d="M2,1 H7 M2.5,1 V6 M6.5,1 V6 M1,6.5 H8 M4.5,6.5 V10.5" fill="none" stroke="#1E1E1E" stroke-width="1.2"/><rect x="4" y="1" width="2.5" height="5" fill="#1E1E1E"/></svg>
<svg style="left:1318px;top:80px" width="11" height="11"><path d="M1,1 L10,10 M10,1 L1,10" stroke="#1E1E1E" stroke-width="1.4"/></svg>
<svg style="left:937px;top:101px" width="16" height="16"><circle cx="7.5" cy="8" r="6.2" fill="none" stroke="#C4C4C4" stroke-width="1"/><path d="M4,8 H11 M7,5 L4,8 L7,11" fill="none" stroke="#C4C4C4" stroke-width="1"/></svg>
<svg style="left:959px;top:101px" width="16" height="16"><circle cx="7.5" cy="8" r="6.2" fill="none" stroke="#C4C4C4" stroke-width="1"/><path d="M4,8 H11 M8,5 L11,8 L8,11" fill="none" stroke="#C4C4C4" stroke-width="1"/></svg>
<svg style="left:981px;top:101px" width="16" height="16"><path d="M1.5,8 L8,1.5 L14.5,8 M3.5,6.5 V15 H7 V10.5 H9 V15 H12.5 V6.5" fill="none" stroke="#424242" stroke-width="1.2"/></svg>
<svg style="left:1002px;top:101px" width="17" height="17"><rect x="6.6" y="0.6" width="9" height="11.5" fill="#F5F5F5" stroke="#1E1E1E" stroke-width="1.2"/><path d="M6.6,2.5 H15.6" stroke="#1E1E1E" stroke-width="1.4"/><path d="M10,5 H14 M10,7.3 H14 M10,9.6 H14 M8.2,5 H9 M8.2,7.3 H9 M8.2,9.6 H9" stroke="#1E1E1E" stroke-width="0.9"/><path d="M1,10 L3.6,12.3 L8.5,8 V16.2 L3.6,11.8 L1,14.2 Z" fill="#F5F5F5" stroke="#7F3FBF" stroke-width="1.7" stroke-linejoin="round"/></svg>
<div class="a" style="left:1025px;top:99px;width:1px;height:20px;background:#CCCEDB"></div>
<svg style="left:1033px;top:100px" width="17" height="17"><path d="M1,1 H6 L3.5,4 Z" fill="#1B6AC9"/><path d="M3.5,2 V5" stroke="#1B6AC9" stroke-width="1"/><circle cx="10" cy="10.5" r="5.3" fill="#DCDCDC" stroke="#1E1E1E" stroke-width="1.2"/><path d="M10,7 V10.8 H13" fill="none" stroke="#1E1E1E" stroke-width="1.1"/></svg>
<svg style="left:1056px;top:108px" width="7" height="4"><path d="M0,0 H7 L3.5,3.5 Z" fill="#717171"/></svg>
<svg style="left:1069px;top:102px" width="15" height="14"><path d="M1,5 H13 M10,2 L13,5 M14,9 H2 M5,12 L2,9" fill="none" stroke="#C4C4C4" stroke-width="1.1"/></svg>
<svg style="left:1090px;top:100px" width="17" height="17"><path d="M4,1 H16 V12" fill="none" stroke="#424242" stroke-width="1.1"/><rect x="1" y="4" width="12" height="12" fill="#E4E4E4" stroke="#424242" stroke-width="1.2"/><path d="M4,10 H10" stroke="#1E1E1E" stroke-width="1.2"/></svg>
<svg style="left:1112px;top:100px" width="17" height="17"><rect x="5" y="2" width="10" height="10" fill="#E8E8E8" stroke="#424242" stroke-width="1.1"/><rect x="1.5" y="5.5" width="9" height="10" fill="#D8D8D8" stroke="#424242" stroke-width="1.1"/></svg>
<div class="a" style="left:1134px;top:99px;width:1px;height:20px;background:#CCCEDB"></div>
<div class="a" style="left:1140px;top:98px;width:22px;height:23px;border:1px solid #3399FF;background:#EEEEF2"></div>
<svg style="left:1143px;top:101px" width="17" height="17"><rect x="1.5" y="1.5" width="3" height="3" fill="none" stroke="#1E1E1E"/><rect x="6.5" y="6.5" width="3" height="3" fill="none" stroke="#1E1E1E"/><rect x="10.5" y="11.5" width="3.5" height="3" fill="none" stroke="#1E1E1E"/><path d="M3,4.5 L6.5,7.5 M8,9.5 L11,11.5" stroke="#1E1E1E"/></svg>
<svg style="left:1165px;top:108px" width="7" height="4"><path d="M0,0 H7 L3.5,3.5 Z" fill="#717171"/></svg>
<div class="a" style="left:1177px;top:99px;width:1px;height:20px;background:#CCCEDB"></div>
<svg style="left:1185px;top:101px" width="16" height="16"><path d="M2,14 L9,7" stroke="#424242" stroke-width="2.4"/><path d="M8,6 C7.5,3 10,0.8 13,1.5 L10.5,4 L12,5.5 L14.5,3 C15.2,6 13,8.5 10,8 Z" fill="#1E1E1E"/></svg>
<div class="a" style="left:1204px;top:97px;width:23px;height:24px;border:1px solid #3399FF;background:#EEEEF2"></div>
<svg style="left:1206px;top:101px" width="19" height="17"><path d="M2,10.5 H13 V13.5 H2 Z" fill="none" stroke="#1E1E1E" stroke-width="1.2"/><path d="M6,10.5 L8,8.5 H13" fill="none" stroke="#1E1E1E" stroke-width="1"/><path d="M15,3 V5 M16.5,7.5 H18.5 M17,4.5 L18,3.5" stroke="#D89614" stroke-width="1"/></svg>
<div class="a" style="left:930px;top:123px;width:405px;height:21px;background:#fff;border:1px solid #CCCEDB"></div>
<div class="t" style="left:935px;top:127px;color:#717171">Search Solution Explorer (Ctrl+;)</div>
<svg style="left:1305px;top:126px" width="16" height="16"><circle cx="10" cy="6" r="3.8" fill="none" stroke="#424242" stroke-width="1.8"/><path d="M7.5,8.5 L2.5,13.5" stroke="#424242" stroke-width="2.2"/></svg>
<svg style="left:1324px;top:132px" width="7" height="4"><path d="M0,0 H7 L3.5,3.5 Z" fill="#717171"/></svg>
<div class="a" style="left:930px;top:165px;width:404px;height:19px;background:#CCCEDB"></div>
<svg style="left:935px;top:152px" width="7" height="9"><path d="M1.4,3.2 V2.4 C1.4,1.1 2.1,0.5 3.1,0.5 C4.1,0.5 4.8,1.1 4.8,2.4 V3.2" fill="none" stroke="#0E6AC7" stroke-width="1"/><rect x="0.55" y="3.2" width="5.1" height="4.3" fill="#F8FAFD" stroke="#0E6AC7" stroke-width="1.1"/><path d="M1.2,5.4 H5" stroke="#B8CDE8" stroke-width="0.8"/></svg>
<svg style="left:945px;top:149px" width="16" height="16"><rect x="0.6" y="0.6" width="13.4" height="12.6" fill="#F5F5F5" stroke="#1E1E1E" stroke-width="1.1"/><path d="M0.6,3.2 H14" stroke="#1E1E1E" stroke-width="1.1"/><path d="M5,8.5 L7.2,10.5 L13,5.5 V14.8 L7.2,9.8 L5,12 Z" fill="none" stroke="#7F3FBF" stroke-width="1.7" stroke-linejoin="round"/></svg>
<div class="t" style="left:965px;top:147px;line-height:19px;">Solution 'MyGame_AnimalGo_MonoGameCSharp' (4 of 4 projects)</div>
<svg style="left:940px;top:171px" width="8" height="8"><path d="M6.5,0.5 V6.5 H0.5 Z" fill="#1E1E1E"/></svg>
<svg style="left:953px;top:171px" width="7" height="9"><path d="M1.4,3.2 V2.4 C1.4,1.1 2.1,0.5 3.1,0.5 C4.1,0.5 4.8,1.1 4.8,2.4 V3.2" fill="none" stroke="#0E6AC7" stroke-width="1"/><rect x="0.55" y="3.2" width="5.1" height="4.3" fill="#F8FAFD" stroke="#0E6AC7" stroke-width="1.1"/><path d="M1.2,5.4 H5" stroke="#B8CDE8" stroke-width="0.8"/></svg>
<svg style="left:963px;top:169px" width="16" height="16"><rect x="0.6" y="0.6" width="13" height="11" fill="#F0F0F0" stroke="#424242" stroke-width="1.1"/><path d="M7,3.8 C6.5,3 5.8,2.7 5,2.7 C3.6,2.7 2.6,3.9 2.6,5.9 C2.6,7.9 3.6,9.1 5,9.1 C5.8,9.1 6.5,8.8 7,8" fill="none" stroke="#388A34" stroke-width="1.1"/><path d="M8,4.6 H12.4 M8,7.2 H12.4 M9.5,3 L9.2,9 M11.2,3 L10.9,9" stroke="#388A34" stroke-width="1"/></svg>
<div class="t" style="left:983px;top:166px;line-height:19px;font-weight:bold;">Android</div>
<svg style="left:959px;top:188px" width="7" height="11"><path d="M0.8,1.2 L4.8,5.5 L0.8,9.8 Z" fill="none" stroke="#1E1E1E" stroke-width="1.1"/></svg>
<svg style="left:981px;top:187px" width="16" height="16"><rect x="0.6" y="4.6" width="4" height="3.8" fill="#fff" stroke="#1E1E1E" stroke-width="1.1"/><rect x="2.3" y="0.6" width="3.6" height="3" fill="none" stroke="#1E1E1E" stroke-width="0.9"/><rect x="8.6" y="0.6" width="6" height="4" fill="#fff" stroke="#1E1E1E" stroke-width="1"/><rect x="8.2" y="4.6" width="5" height="4.8" fill="#fff" stroke="#1E1E1E" stroke-width="1.1"/><path d="M4.6,6.2 H8.2" stroke="#999" stroke-width="1.2"/></svg>
<div class="t" style="left:1001px;top:185px;line-height:19px;">Dependencies</div>
<svg style="left:959px;top:207px" width="7" height="11"><path d="M0.8,1.2 L4.8,5.5 L0.8,9.8 Z" fill="none" stroke="#1E1E1E" stroke-width="1.1"/></svg>
<svg style="left:971px;top:209px" width="7" height="9"><path d="M1.4,3.2 V2.4 C1.4,1.1 2.1,0.5 3.1,0.5 C4.1,0.5 4.8,1.1 4.8,2.4 V3.2" fill="none" stroke="#0E6AC7" stroke-width="1"/><rect x="0.55" y="3.2" width="5.1" height="4.3" fill="#F8FAFD" stroke="#0E6AC7" stroke-width="1.1"/><path d="M1.2,5.4 H5" stroke="#B8CDE8" stroke-width="0.8"/></svg>
<svg style="left:981px;top:206px" width="16" height="16"><path d="M0.7,1.2 H5.5 L6.5,2.4 H13.3 V11.3 H0.7 Z" fill="#C6A96A" stroke="#A57F2C" stroke-width="1.1"/><rect x="0.6" y="6" width="7.4" height="6.8" fill="#F5F5F5" stroke="#1E1E1E" stroke-width="1.1"/><path d="M2.5,11 L5.8,7.8 M3.5,7.8 H5.8 V10" fill="none" stroke="#1E1E1E" stroke-width="0.9"/></svg>
<div class="t" style="left:1001px;top:204px;line-height:19px;">ContentLink</div>
<svg style="left:959px;top:226px" width="7" height="11"><path d="M0.8,1.2 L4.8,5.5 L0.8,9.8 Z" fill="none" stroke="#1E1E1E" stroke-width="1.1"/></svg>
<svg style="left:971px;top:228px" width="7" height="9"><path d="M1.4,3.2 V2.4 C1.4,1.1 2.1,0.5 3.1,0.5 C4.1,0.5 4.8,1.1 4.8,2.4 V3.2" fill="none" stroke="#0E6AC7" stroke-width="1"/><rect x="0.55" y="3.2" width="5.1" height="4.3" fill="#F8FAFD" stroke="#0E6AC7" stroke-width="1.1"/><path d="M1.2,5.4 H5" stroke="#B8CDE8" stroke-width="0.8"/></svg>
<svg style="left:981px;top:225px" width="16" height="16"><path d="M0.7,1.2 H5.5 L6.5,2.4 H13.3 V11.3 H0.7 Z" fill="#C6A96A" stroke="#A57F2C" stroke-width="1.1"/><path d="M0.7,3.3 H13.3" stroke="#A57F2C" stroke-width="0.8"/></svg>
<div class="t" style="left:1001px;top:223px;line-height:19px;">Resources</div>
<svg style="left:959px;top:245px" width="7" height="11"><path d="M0.8,1.2 L4.8,5.5 L0.8,9.8 Z" fill="none" stroke="#1E1E1E" stroke-width="1.1"/></svg>
<svg style="left:971px;top:247px" width="7" height="9"><path d="M1.4,3.2 V2.4 C1.4,1.1 2.1,0.5 3.1,0.5 C4.1,0.5 4.8,1.1 4.8,2.4 V3.2" fill="none" stroke="#0E6AC7" stroke-width="1"/><rect x="0.55" y="3.2" width="5.1" height="4.3" fill="#F8FAFD" stroke="#0E6AC7" stroke-width="1.1"/><path d="M1.2,5.4 H5" stroke="#B8CDE8" stroke-width="0.8"/></svg>
<svg style="left:981px;top:244px" width="16" height="16"><text x="0" y="11" font-size="11" font-family="Liberation Sans" fill="#388A34">C</text><path d="M8.5,5.5 H13.5 M8.5,8.5 H13.5 M10.2,3.5 L9.7,10.5 M12.2,3.5 L11.7,10.5" stroke="#388A34" stroke-width="1.1"/></svg>
<div class="t" style="left:1001px;top:242px;line-height:19px;">Activity1.cs</div>
<svg style="left:971px;top:266px" width="7" height="9"><path d="M1.4,3.2 V2.4 C1.4,1.1 2.1,0.5 3.1,0.5 C4.1,0.5 4.8,1.1 4.8,2.4 V3.2" fill="none" stroke="#0E6AC7" stroke-width="1"/><rect x="0.55" y="3.2" width="5.1" height="4.3" fill="#F8FAFD" stroke="#0E6AC7" stroke-width="1.1"/><path d="M1.2,5.4 H5" stroke="#B8CDE8" stroke-width="0.8"/></svg>
<svg style="left:981px;top:263px" width="16" height="16"><path d="M2.6,8.5 V0.6 H9.5 L12.6,3.7 V13.4 H10" fill="#E4E4E4" stroke="#424242" stroke-width="1.1"/><path d="M9.5,0.6 V3.7 H12.6" fill="#424242"/><path d="M3,10 L1,12 L3,14 M7,10 L5,14.5 M9,10 L11,12 L9,14" fill="none" stroke="#1E1E1E" stroke-width="0.9"/></svg>
<div class="t" style="left:1001px;top:261px;line-height:19px;">AndroidManifest.xml</div>
<svg style="left:940px;top:285px" width="8" height="8"><path d="M6.5,0.5 V6.5 H0.5 Z" fill="#1E1E1E"/></svg>
<svg style="left:953px;top:285px" width="7" height="9"><path d="M1.4,3.2 V2.4 C1.4,1.1 2.1,0.5 3.1,0.5 C4.1,0.5 4.8,1.1 4.8,2.4 V3.2" fill="none" stroke="#0E6AC7" stroke-width="1"/><rect x="0.55" y="3.2" width="5.1" height="4.3" fill="#F8FAFD" stroke="#0E6AC7" stroke-width="1.1"/><path d="M1.2,5.4 H5" stroke="#B8CDE8" stroke-width="0.8"/></svg>
<svg style="left:963px;top:283px" width="16" height="16"><rect x="0.6" y="0.6" width="13" height="11" fill="#F0F0F0" stroke="#424242" stroke-width="1.1"/><path d="M7,3.8 C6.5,3 5.8,2.7 5,2.7 C3.6,2.7 2.6,3.9 2.6,5.9 C2.6,7.9 3.6,9.1 5,9.1 C5.8,9.1 6.5,8.8 7,8" fill="none" stroke="#388A34" stroke-width="1.1"/><path d="M8,4.6 H12.4 M8,7.2 H12.4 M9.5,3 L9.2,9 M11.2,3 L10.9,9" stroke="#388A34" stroke-width="1"/></svg>
<div class="t" style="left:983px;top:280px;line-height:19px;">GameLogic</div>
<svg style="left:959px;top:302px" width="7" height="11"><path d="M0.8,1.2 L4.8,5.5 L0.8,9.8 Z" fill="none" stroke="#1E1E1E" stroke-width="1.1"/></svg>
<svg style="left:981px;top:301px" width="16" height="16"><rect x="0.6" y="4.6" width="4" height="3.8" fill="#fff" stroke="#1E1E1E" stroke-width="1.1"/><rect x="2.3" y="0.6" width="3.6" height="3" fill="none" stroke="#1E1E1E" stroke-width="0.9"/><rect x="8.6" y="0.6" width="6" height="4" fill="#fff" stroke="#1E1E1E" stroke-width="1"/><rect x="8.2" y="4.6" width="5" height="4.8" fill="#fff" stroke="#1E1E1E" stroke-width="1.1"/><path d="M4.6,6.2 H8.2" stroke="#999" stroke-width="1.2"/></svg>
<div class="t" style="left:1001px;top:299px;line-height:19px;">Dependencies</div>
<svg style="left:959px;top:321px" width="7" height="11"><path d="M0.8,1.2 L4.8,5.5 L0.8,9.8 Z" fill="none" stroke="#1E1E1E" stroke-width="1.1"/></svg>
<svg style="left:971px;top:323px" width="7" height="9"><path d="M1.4,3.2 V2.4 C1.4,1.1 2.1,0.5 3.1,0.5 C4.1,0.5 4.8,1.1 4.8,2.4 V3.2" fill="none" stroke="#0E6AC7" stroke-width="1"/><rect x="0.55" y="3.2" width="5.1" height="4.3" fill="#F8FAFD" stroke="#0E6AC7" stroke-width="1.1"/><path d="M1.2,5.4 H5" stroke="#B8CDE8" stroke-width="0.8"/></svg>
<svg style="left:981px;top:320px" width="16" height="16"><path d="M0.7,1.2 H5.5 L6.5,2.4 H13.3 V11.3 H0.7 Z" fill="#C6A96A" stroke="#A57F2C" stroke-width="1.1"/><path d="M0.7,3.3 H13.3" stroke="#A57F2C" stroke-width="0.8"/></svg>
<div class="t" style="left:1001px;top:318px;line-height:19px;">Content</div>
<svg style="left:959px;top:340px" width="7" height="11"><path d="M0.8,1.2 L4.8,5.5 L0.8,9.8 Z" fill="none" stroke="#1E1E1E" stroke-width="1.1"/></svg>
<svg style="left:971px;top:342px" width="7" height="9"><path d="M1.4,3.2 V2.4 C1.4,1.1 2.1,0.5 3.1,0.5 C4.1,0.5 4.8,1.1 4.8,2.4 V3.2" fill="none" stroke="#0E6AC7" stroke-width="1"/><rect x="0.55" y="3.2" width="5.1" height="4.3" fill="#F8FAFD" stroke="#0E6AC7" stroke-width="1.1"/><path d="M1.2,5.4 H5" stroke="#B8CDE8" stroke-width="0.8"/></svg>
<svg style="left:981px;top:339px" width="16" height="16"><path d="M0.7,1.2 H5.5 L6.5,2.4 H13.3 V11.3 H0.7 Z" fill="#C6A96A" stroke="#A57F2C" stroke-width="1.1"/><path d="M0.7,3.3 H13.3" stroke="#A57F2C" stroke-width="0.8"/></svg>
<div class="t" style="left:1001px;top:337px;line-height:19px;">MyGame</div>
<svg style="left:959px;top:359px" width="7" height="11"><path d="M0.8,1.2 L4.8,5.5 L0.8,9.8 Z" fill="none" stroke="#1E1E1E" stroke-width="1.1"/></svg>
<svg style="left:971px;top:361px" width="7" height="9"><path d="M1.4,3.2 V2.4 C1.4,1.1 2.1,0.5 3.1,0.5 C4.1,0.5 4.8,1.1 4.8,2.4 V3.2" fill="none" stroke="#0E6AC7" stroke-width="1"/><rect x="0.55" y="3.2" width="5.1" height="4.3" fill="#F8FAFD" stroke="#0E6AC7" stroke-width="1.1"/><path d="M1.2,5.4 H5" stroke="#B8CDE8" stroke-width="0.8"/></svg>
<svg style="left:981px;top:358px" width="16" height="16"><path d="M0.7,1.2 H5.5 L6.5,2.4 H13.3 V11.3 H0.7 Z" fill="#C6A96A" stroke="#A57F2C" stroke-width="1.1"/><path d="M0.7,3.3 H13.3" stroke="#A57F2C" stroke-width="0.8"/></svg>
<div class="t" style="left:1001px;top:356px;line-height:19px;">MyLevels</div>
<svg style="left:959px;top:378px" width="7" height="11"><path d="M0.8,1.2 L4.8,5.5 L0.8,9.8 Z" fill="none" stroke="#1E1E1E" stroke-width="1.1"/></svg>
<svg style="left:971px;top:380px" width="7" height="9"><path d="M1.4,3.2 V2.4 C1.4,1.1 2.1,0.5 3.1,0.5 C4.1,0.5 4.8,1.1 4.8,2.4 V3.2" fill="none" stroke="#0E6AC7" stroke-width="1"/><rect x="0.55" y="3.2" width="5.1" height="4.3" fill="#F8FAFD" stroke="#0E6AC7" stroke-width="1.1"/><path d="M1.2,5.4 H5" stroke="#B8CDE8" stroke-width="0.8"/></svg>
<svg style="left:981px;top:377px" width="16" height="16"><path d="M0.7,1.2 H5.5 L6.5,2.4 H13.3 V11.3 H0.7 Z" fill="#C6A96A" stroke="#A57F2C" stroke-width="1.1"/><path d="M0.7,3.3 H13.3" stroke="#A57F2C" stroke-width="0.8"/></svg>
<div class="t" style="left:1001px;top:375px;line-height:19px;">MyUnits</div>
<svg style="left:959px;top:397px" width="7" height="11"><path d="M0.8,1.2 L4.8,5.5 L0.8,9.8 Z" fill="none" stroke="#1E1E1E" stroke-width="1.1"/></svg>
<svg style="left:971px;top:399px" width="7" height="9"><path d="M1.4,3.2 V2.4 C1.4,1.1 2.1,0.5 3.1,0.5 C4.1,0.5 4.8,1.1 4.8,2.4 V3.2" fill="none" stroke="#0E6AC7" stroke-width="1"/><rect x="0.55" y="3.2" width="5.1" height="4.3" fill="#F8FAFD" stroke="#0E6AC7" stroke-width="1.1"/><path d="M1.2,5.4 H5" stroke="#B8CDE8" stroke-width="0.8"/></svg>
<svg style="left:981px;top:396px" width="16" height="16"><text x="0" y="11" font-size="11" font-family="Liberation Sans" fill="#388A34">C</text><path d="M8.5,5.5 H13.5 M8.5,8.5 H13.5 M10.2,3.5 L9.7,10.5 M12.2,3.5 L11.7,10.5" stroke="#388A34" stroke-width="1.1"/></svg>
<div class="t" style="left:1001px;top:394px;line-height:19px;">Game1.cs</div>
<svg style="left:940px;top:418px" width="8" height="8"><path d="M6.5,0.5 V6.5 H0.5 Z" fill="#1E1E1E"/></svg>
<svg style="left:953px;top:418px" width="7" height="9"><path d="M1.4,3.2 V2.4 C1.4,1.1 2.1,0.5 3.1,0.5 C4.1,0.5 4.8,1.1 4.8,2.4 V3.2" fill="none" stroke="#0E6AC7" stroke-width="1"/><rect x="0.55" y="3.2" width="5.1" height="4.3" fill="#F8FAFD" stroke="#0E6AC7" stroke-width="1.1"/><path d="M1.2,5.4 H5" stroke="#B8CDE8" stroke-width="0.8"/></svg>
<svg style="left:963px;top:416px" width="16" height="16"><rect x="0.6" y="0.6" width="13" height="11" fill="#F0F0F0" stroke="#424242" stroke-width="1.1"/><path d="M7,3.8 C6.5,3 5.8,2.7 5,2.7 C3.6,2.7 2.6,3.9 2.6,5.9 C2.6,7.9 3.6,9.1 5,9.1 C5.8,9.1 6.5,8.8 7,8" fill="none" stroke="#388A34" stroke-width="1.1"/><path d="M8,4.6 H12.4 M8,7.2 H12.4 M9.5,3 L9.2,9 M11.2,3 L10.9,9" stroke="#388A34" stroke-width="1"/></svg>
<div class="t" style="left:983px;top:413px;line-height:19px;">iOS</div>
<svg style="left:959px;top:435px" width="7" height="11"><path d="M0.8,1.2 L4.8,5.5 L0.8,9.8 Z" fill="none" stroke="#1E1E1E" stroke-width="1.1"/></svg>
<svg style="left:981px;top:434px" width="16" height="16"><rect x="0.6" y="4.6" width="4" height="3.8" fill="#fff" stroke="#1E1E1E" stroke-width="1.1"/><rect x="2.3" y="0.6" width="3.6" height="3" fill="none" stroke="#1E1E1E" stroke-width="0.9"/><rect x="8.6" y="0.6" width="6" height="4" fill="#fff" stroke="#1E1E1E" stroke-width="1"/><rect x="8.2" y="4.6" width="5" height="4.8" fill="#fff" stroke="#1E1E1E" stroke-width="1.1"/><path d="M4.6,6.2 H8.2" stroke="#999" stroke-width="1.2"/></svg>
<div class="t" style="left:1001px;top:432px;line-height:19px;">Dependencies</div>
<svg style="left:981px;top:453px" width="16" height="16"><path d="M0.8,0.8 H13.2 V13.2 H0.8 Z M7.2,0.8 V13.2 M7.2,6.5 H13.2" fill="none" stroke="#333" stroke-width="1.4"/><path d="M2.5,2.5 V11.5 H5.5" fill="none" stroke="#F5F5F5" stroke-width="1"/><rect x="8.8" y="8.5" width="2.5" height="2.5" fill="#F5F5F5"/><rect x="4.5" y="0" width="1.5" height="3" fill="#F5F5F5"/></svg>
<div class="t" style="left:1001px;top:451px;line-height:19px;">Asset Catalogs</div>
<svg style="left:981px;top:472px" width="16" height="16"><rect x="0.5" y="3" width="4" height="4" fill="#424242"/><rect x="8.3" y="2" width="5.5" height="6.5" fill="#424242"/><path d="M5.2,5 H7.4" stroke="#424242" stroke-width="1"/></svg>
<div class="t" style="left:1001px;top:470px;line-height:19px;">Native References</div>
<svg style="left:959px;top:492px" width="7" height="11"><path d="M0.8,1.2 L4.8,5.5 L0.8,9.8 Z" fill="none" stroke="#1E1E1E" stroke-width="1.1"/></svg>
<svg style="left:971px;top:494px" width="7" height="9"><path d="M1.4,3.2 V2.4 C1.4,1.1 2.1,0.5 3.1,0.5 C4.1,0.5 4.8,1.1 4.8,2.4 V3.2" fill="none" stroke="#0E6AC7" stroke-width="1"/><rect x="0.55" y="3.2" width="5.1" height="4.3" fill="#F8FAFD" stroke="#0E6AC7" stroke-width="1.1"/><path d="M1.2,5.4 H5" stroke="#B8CDE8" stroke-width="0.8"/></svg>
<svg style="left:981px;top:491px" width="16" height="16"><path d="M0.7,1.2 H5.5 L6.5,2.4 H13.3 V11.3 H0.7 Z" fill="#C6A96A" stroke="#A57F2C" stroke-width="1.1"/><rect x="0.6" y="6" width="7.4" height="6.8" fill="#F5F5F5" stroke="#1E1E1E" stroke-width="1.1"/><path d="M2.5,11 L5.8,7.8 M3.5,7.8 H5.8 V10" fill="none" stroke="#1E1E1E" stroke-width="0.9"/></svg>
<div class="t" style="left:1001px;top:489px;line-height:19px;">ContentLink</div>
<svg style="left:971px;top:513px" width="7" height="9"><path d="M1.4,3.2 V2.4 C1.4,1.1 2.1,0.5 3.1,0.5 C4.1,0.5 4.8,1.1 4.8,2.4 V3.2" fill="none" stroke="#0E6AC7" stroke-width="1"/><rect x="0.55" y="3.2" width="5.1" height="4.3" fill="#F8FAFD" stroke="#0E6AC7" stroke-width="1.1"/><path d="M1.2,5.4 H5" stroke="#B8CDE8" stroke-width="0.8"/></svg>
<svg style="left:981px;top:510px" width="16" height="16"><rect x="0.6" y="0.6" width="12.8" height="12.2" fill="#DCDCDC" stroke="#1E1E1E" stroke-width="1.1"/><circle cx="9.7" cy="3.3" r="1.3" fill="#B0800C"/><path d="M1.5,9.5 L4.5,6.5 L7.5,9 L10,7 L13,9.5" fill="none" stroke="#1B6AC9" stroke-width="1.1"/></svg>
<div class="t" style="left:1001px;top:508px;line-height:19px;">Default.png</div>
<svg style="left:971px;top:532px" width="7" height="9"><path d="M1.4,3.2 V2.4 C1.4,1.1 2.1,0.5 3.1,0.5 C4.1,0.5 4.8,1.1 4.8,2.4 V3.2" fill="none" stroke="#0E6AC7" stroke-width="1"/><rect x="0.55" y="3.2" width="5.1" height="4.3" fill="#F8FAFD" stroke="#0E6AC7" stroke-width="1.1"/><path d="M1.2,5.4 H5" stroke="#B8CDE8" stroke-width="0.8"/></svg>
<svg style="left:981px;top:529px" width="16" height="16"><path d="M2.7,5.5 V0.6 H9.5 L12.4,3.5 V13.4 H10" fill="#E4E4E4" stroke="#424242" stroke-width="1.1"/><path d="M9.5,0.6 V3.5 H12.4" fill="#424242"/><rect x="0.6" y="7" width="7" height="6.4" fill="#F5F5F5" stroke="#1E1E1E" stroke-width="1.1"/><path d="M2.5,11.8 L5.5,8.7 M3.5,8.7 H5.5 V10.7" fill="none" stroke="#1E1E1E" stroke-width="0.9"/></svg>
<div class="t" style="left:1001px;top:527px;line-height:19px;">Entitlements.plist</div>
<svg style="left:971px;top:551px" width="7" height="9"><path d="M1.4,3.2 V2.4 C1.4,1.1 2.1,0.5 3.1,0.5 C4.1,0.5 4.8,1.1 4.8,2.4 V3.2" fill="none" stroke="#0E6AC7" stroke-width="1"/><rect x="0.55" y="3.2" width="5.1" height="4.3" fill="#F8FAFD" stroke="#0E6AC7" stroke-width="1.1"/><path d="M1.2,5.4 H5" stroke="#B8CDE8" stroke-width="0.8"/></svg>
<svg style="left:981px;top:548px" width="16" height="16"><rect x="0.6" y="0.6" width="12.8" height="12.2" fill="#DCDCDC" stroke="#1E1E1E" stroke-width="1.1"/><circle cx="9.7" cy="3.3" r="1.3" fill="#B0800C"/><path d="M1.5,9.5 L4.5,6.5 L7.5,9 L10,7 L13,9.5" fill="none" stroke="#1B6AC9" stroke-width="1.1"/></svg>
<div class="t" style="left:1001px;top:546px;line-height:19px;">GameThumbnail.png</div>
<svg style="left:971px;top:570px" width="7" height="9"><path d="M1.4,3.2 V2.4 C1.4,1.1 2.1,0.5 3.1,0.5 C4.1,0.5 4.8,1.1 4.8,2.4 V3.2" fill="none" stroke="#0E6AC7" stroke-width="1"/><rect x="0.55" y="3.2" width="5.1" height="4.3" fill="#F8FAFD" stroke="#0E6AC7" stroke-width="1.1"/><path d="M1.2,5.4 H5" stroke="#B8CDE8" stroke-width="0.8"/></svg>
<svg style="left:981px;top:567px" width="16" height="16"><path d="M2.7,5.5 V0.6 H9.5 L12.4,3.5 V13.4 H10" fill="#E4E4E4" stroke="#424242" stroke-width="1.1"/><path d="M9.5,0.6 V3.5 H12.4" fill="#424242"/><rect x="0.6" y="7" width="7" height="6.4" fill="#F5F5F5" stroke="#1E1E1E" stroke-width="1.1"/><path d="M2.5,11.8 L5.5,8.7 M3.5,8.7 H5.5 V10.7" fill="none" stroke="#1E1E1E" stroke-width="0.9"/></svg>
<div class="t" style="left:1001px;top:565px;line-height:19px;">Info.plist</div>
<svg style="left:971px;top:589px" width="7" height="9"><path d="M1.4,3.2 V2.4 C1.4,1.1 2.1,0.5 3.1,0.5 C4.1,0.5 4.8,1.1 4.8,2.4 V3.2" fill="none" stroke="#0E6AC7" stroke-width="1"/><rect x="0.55" y="3.2" width="5.1" height="4.3" fill="#F8FAFD" stroke="#0E6AC7" stroke-width="1.1"/><path d="M1.2,5.4 H5" stroke="#B8CDE8" stroke-width="0.8"/></svg>
<svg style="left:981px;top:586px" width="16" height="16"><path d="M1.2,0.6 H9 L12.4,4 V15 H1.2 Z" fill="#E4E4E4" stroke="#424242" stroke-width="1.1"/><path d="M9,0.6 V4 H12.4" fill="#424242"/></svg>
<div class="t" style="left:1001px;top:584px;line-height:19px;">LaunchScreen.storyboard</div>
<svg style="left:959px;top:606px" width="7" height="11"><path d="M0.8,1.2 L4.8,5.5 L0.8,9.8 Z" fill="none" stroke="#1E1E1E" stroke-width="1.1"/></svg>
<svg style="left:971px;top:608px" width="7" height="9"><path d="M1.4,3.2 V2.4 C1.4,1.1 2.1,0.5 3.1,0.5 C4.1,0.5 4.8,1.1 4.8,2.4 V3.2" fill="none" stroke="#0E6AC7" stroke-width="1"/><rect x="0.55" y="3.2" width="5.1" height="4.3" fill="#F8FAFD" stroke="#0E6AC7" stroke-width="1.1"/><path d="M1.2,5.4 H5" stroke="#B8CDE8" stroke-width="0.8"/></svg>
<svg style="left:981px;top:605px" width="16" height="16"><text x="0" y="11" font-size="11" font-family="Liberation Sans" fill="#388A34">C</text><path d="M8.5,5.5 H13.5 M8.5,8.5 H13.5 M10.2,3.5 L9.7,10.5 M12.2,3.5 L11.7,10.5" stroke="#388A34" stroke-width="1.1"/></svg>
<div class="t" style="left:1001px;top:603px;line-height:19px;">Program.cs</div>
<svg style="left:940px;top:627px" width="8" height="8"><path d="M6.5,0.5 V6.5 H0.5 Z" fill="#1E1E1E"/></svg>
<svg style="left:953px;top:627px" width="7" height="9"><path d="M1.4,3.2 V2.4 C1.4,1.1 2.1,0.5 3.1,0.5 C4.1,0.5 4.8,1.1 4.8,2.4 V3.2" fill="none" stroke="#0E6AC7" stroke-width="1"/><rect x="0.55" y="3.2" width="5.1" height="4.3" fill="#F8FAFD" stroke="#0E6AC7" stroke-width="1.1"/><path d="M1.2,5.4 H5" stroke="#B8CDE8" stroke-width="0.8"/></svg>
<svg style="left:963px;top:625px" width="16" height="16"><rect x="0.6" y="0.6" width="13" height="11" fill="#F0F0F0" stroke="#424242" stroke-width="1.1"/><path d="M7,3.8 C6.5,3 5.8,2.7 5,2.7 C3.6,2.7 2.6,3.9 2.6,5.9 C2.6,7.9 3.6,9.1 5,9.1 C5.8,9.1 6.5,8.8 7,8" fill="none" stroke="#388A34" stroke-width="1.1"/><path d="M8,4.6 H12.4 M8,7.2 H12.4 M9.5,3 L9.2,9 M11.2,3 L10.9,9" stroke="#388A34" stroke-width="1"/></svg>
<div class="t" style="left:983px;top:622px;line-height:19px;">Windows</div>
<svg style="left:959px;top:644px" width="7" height="11"><path d="M0.8,1.2 L4.8,5.5 L0.8,9.8 Z" fill="none" stroke="#1E1E1E" stroke-width="1.1"/></svg>
<svg style="left:981px;top:643px" width="16" height="16"><rect x="0.6" y="4.6" width="4" height="3.8" fill="#fff" stroke="#1E1E1E" stroke-width="1.1"/><rect x="2.3" y="0.6" width="3.6" height="3" fill="none" stroke="#1E1E1E" stroke-width="0.9"/><rect x="8.6" y="0.6" width="6" height="4" fill="#fff" stroke="#1E1E1E" stroke-width="1"/><rect x="8.2" y="4.6" width="5" height="4.8" fill="#fff" stroke="#1E1E1E" stroke-width="1.1"/><path d="M4.6,6.2 H8.2" stroke="#999" stroke-width="1.2"/></svg>
<div class="t" style="left:1001px;top:641px;line-height:19px;">Dependencies</div>
<svg style="left:959px;top:663px" width="7" height="11"><path d="M0.8,1.2 L4.8,5.5 L0.8,9.8 Z" fill="none" stroke="#1E1E1E" stroke-width="1.1"/></svg>
<svg style="left:971px;top:665px" width="7" height="9"><path d="M1.4,3.2 V2.4 C1.4,1.1 2.1,0.5 3.1,0.5 C4.1,0.5 4.8,1.1 4.8,2.4 V3.2" fill="none" stroke="#0E6AC7" stroke-width="1"/><rect x="0.55" y="3.2" width="5.1" height="4.3" fill="#F8FAFD" stroke="#0E6AC7" stroke-width="1.1"/><path d="M1.2,5.4 H5" stroke="#B8CDE8" stroke-width="0.8"/></svg>
<svg style="left:981px;top:662px" width="16" height="16"><path d="M0.7,1.2 H5.5 L6.5,2.4 H13.3 V11.3 H0.7 Z" fill="#C6A96A" stroke="#A57F2C" stroke-width="1.1"/><rect x="0.6" y="6" width="7.4" height="6.8" fill="#F5F5F5" stroke="#1E1E1E" stroke-width="1.1"/><path d="M2.5,11 L5.8,7.8 M3.5,7.8 H5.8 V10" fill="none" stroke="#1E1E1E" stroke-width="0.9"/></svg>
<div class="t" style="left:1001px;top:660px;line-height:19px;">ContentLink</div>
<svg style="left:971px;top:684px" width="7" height="9"><path d="M1.4,3.2 V2.4 C1.4,1.1 2.1,0.5 3.1,0.5 C4.1,0.5 4.8,1.1 4.8,2.4 V3.2" fill="none" stroke="#0E6AC7" stroke-width="1"/><rect x="0.55" y="3.2" width="5.1" height="4.3" fill="#F8FAFD" stroke="#0E6AC7" stroke-width="1.1"/><path d="M1.2,5.4 H5" stroke="#B8CDE8" stroke-width="0.8"/></svg>
<svg style="left:981px;top:681px" width="16" height="16"><path d="M0.6,8 V13.4 H7.5 V11.5" fill="#E4E4E4" stroke="#424242" stroke-width="1.1"/><rect x="4.2" y="2.5" width="9.3" height="8.2" fill="#F5F5F5" stroke="#1E1E1E" stroke-width="1.1"/><rect x="4.2" y="6" width="3.5" height="3.5" fill="none" stroke="#1E1E1E" stroke-width="1"/><path d="M9,4.5 H12 M9,6.7 H12 M9,8.7 H12" stroke="#1E1E1E" stroke-width="0.9"/><path d="M5.2,0.6 V4" stroke="#1E1E1E" stroke-width="1"/></svg>
<div class="t" style="left:1001px;top:679px;line-height:19px;">app.manifest</div>
<svg style="left:971px;top:703px" width="7" height="9"><path d="M1.4,3.2 V2.4 C1.4,1.1 2.1,0.5 3.1,0.5 C4.1,0.5 4.8,1.1 4.8,2.4 V3.2" fill="none" stroke="#0E6AC7" stroke-width="1"/><rect x="0.55" y="3.2" width="5.1" height="4.3" fill="#F8FAFD" stroke="#0E6AC7" stroke-width="1.1"/><path d="M1.2,5.4 H5" stroke="#B8CDE8" stroke-width="0.8"/></svg>
<svg style="left:981px;top:700px" width="16" height="16"><rect x="0.6" y="0.6" width="12.8" height="12.2" fill="#DCDCDC" stroke="#1E1E1E" stroke-width="1.1"/><circle cx="9.7" cy="3.3" r="1.3" fill="#B0800C"/><path d="M1.5,9.5 L4.5,6.5 L7.5,9 L10,7 L13,9.5" fill="none" stroke="#1B6AC9" stroke-width="1.1"/></svg>
<div class="t" style="left:1001px;top:698px;line-height:19px;">Icon.bmp</div>
<svg style="left:971px;top:722px" width="7" height="9"><path d="M1.4,3.2 V2.4 C1.4,1.1 2.1,0.5 3.1,0.5 C4.1,0.5 4.8,1.1 4.8,2.4 V3.2" fill="none" stroke="#0E6AC7" stroke-width="1"/><rect x="0.55" y="3.2" width="5.1" height="4.3" fill="#F8FAFD" stroke="#0E6AC7" stroke-width="1.1"/><path d="M1.2,5.4 H5" stroke="#B8CDE8" stroke-width="0.8"/></svg>
<svg style="left:981px;top:719px" width="16" height="16"><path d="M1.2,0.6 H9.5 L12.4,3.5 V14 H1.2 Z" fill="#E4E4E4" stroke="#424242" stroke-width="1.1"/><path d="M9.5,0.6 V3.5 H12.4" fill="#424242"/><path d="M3,4 H9 M10.5,5.5 V12" stroke="#1E1E1E" stroke-width="0.9" stroke-dasharray="1 1"/><path d="M5.5,7.2 L6.3,9 L8.2,9 L6.8,10.2 L7.3,12 L5.5,11 L3.7,12 L4.2,10.2 L2.8,9 L4.7,9 Z" fill="#1E1E1E"/></svg>
<div class="t" style="left:1001px;top:717px;line-height:19px;">Icon.ico</div>
<svg style="left:959px;top:739px" width="7" height="11"><path d="M0.8,1.2 L4.8,5.5 L0.8,9.8 Z" fill="none" stroke="#1E1E1E" stroke-width="1.1"/></svg>
<svg style="left:971px;top:741px" width="7" height="9"><path d="M1.4,3.2 V2.4 C1.4,1.1 2.1,0.5 3.1,0.5 C4.1,0.5 4.8,1.1 4.8,2.4 V3.2" fill="none" stroke="#0E6AC7" stroke-width="1"/><rect x="0.55" y="3.2" width="5.1" height="4.3" fill="#F8FAFD" stroke="#0E6AC7" stroke-width="1.1"/><path d="M1.2,5.4 H5" stroke="#B8CDE8" stroke-width="0.8"/></svg>
<svg style="left:981px;top:738px" width="16" height="16"><text x="0" y="11" font-size="11" font-family="Liberation Sans" fill="#388A34">C</text><path d="M8.5,5.5 H13.5 M8.5,8.5 H13.5 M10.2,3.5 L9.7,10.5 M12.2,3.5 L11.7,10.5" stroke="#388A34" stroke-width="1.1"/></svg>
<div class="t" style="left:1001px;top:736px;line-height:19px;">Program.cs</div>
<div class="a" style="left:1031px;top:793px;width:304px;height:1px;background:#CCCEDB"></div>
<div class="a" style="left:929px;top:793px;width:102px;height:21px;background:#F5F5F5;border:1px solid #CCCEDB;border-top:none"></div>
<div class="t" style="left:935px;top:796px;color:#0E70C0">Solution Explorer</div>
<div class="t" style="left:1037px;top:796px">Git Changes</div>
<div class="t" style="left:1342px;top:73px;transform-origin:0 0;transform:translate(14px,0) rotate(90deg)">Diagnostic Tools</div>
<div class="a" style="left:1360px;top:73px;width:6px;height:86px;background:#CCCEDB"></div>
</div>

<!-- OUTPUT -->
<div id="out">
<div class="a" style="left:7px;top:662px;width:916px;height:132px;background:#F5F5F5;border:1px solid #CCCEDB;border-top:none"></div>
<div class="a" style="left:8px;top:662px;width:914px;height:21px;background:#0064BC"></div>
<div class="t" style="left:13px;top:665px;color:#fff">Output</div>
<svg style="left:58px;top:669px" width="809" height="7"><defs><pattern id="gp1" width="4" height="4" patternUnits="userSpaceOnUse"><rect x="0" y="0" width="1" height="1" fill="#4D8FD6"/><rect x="2" y="2" width="1" height="1" fill="#4D8FD6"/></pattern></defs><rect width="809" height="7" fill="url(#gp1)"/></svg>
<svg style="left:874px;top:670px" width="9" height="5"><path d="M0,0 H8 L4,4 Z" fill="#fff"/></svg>
<svg style="left:890px;top:666px" width="9" height="11"><path d="M2,1 H7 M2.5,1 V6 M6.5,1 V6 M1,6.5 H8 M4.5,6.5 V10.5" fill="none" stroke="#fff" stroke-width="1.2"/><rect x="4" y="1" width="2.5" height="5" fill="#fff"/></svg>
<svg style="left:906px;top:667px" width="11" height="11"><path d="M1,1 L10,10 M10,1 L1,10" stroke="#fff" stroke-width="1.4"/></svg>
<div class="a" style="left:8px;top:683px;width:914px;height:26px;background:#EEEEF2"></div>
<div class="t" style="left:15px;top:690px"><span style="text-decoration:underline;text-underline-offset:1px">S</span>how output from:</div>
<div class="a" style="left:121px;top:686px;width:300px;height:20px;background:#fff;border:1px solid #CCCEDB"></div>
<div class="t" style="left:125px;top:689px">Debug</div>
<svg style="left:410px;top:694px" width="7" height="4"><path d="M0,0 H7 L3.5,3.5 Z" fill="#717171"/></svg>
<div class="a" style="left:427px;top:687px;width:1px;height:18px;background:#CCCEDB"></div>
<svg style="left:434px;top:688px" width="16" height="15"><path d="M6,9 V4 C6,2.3 7,1.2 8.5,1.2 C10,1.2 11,2.3 11,4 M3.8,6.8 L6,9.2 L8.2,6.8" fill="none" stroke="#C4C4C4" stroke-width="1"/><path d="M2,9.5 H15 M2,12.5 H15" stroke="#C4C4C4" stroke-width="1"/><path d="M2,11 H10" stroke="#C4C4C4" stroke-width="1"/></svg>
<div class="a" style="left:457px;top:687px;width:1px;height:18px;background:#CCCEDB"></div>
<svg style="left:464px;top:688px" width="16" height="15"><path d="M2.5,3.5 H10.5 M5.5,0.8 L2.5,3.5 L5.5,6.2" fill="none" stroke="#C4C4C4" stroke-width="1"/><path d="M3,9 H14 M3,11.5 H14" stroke="#C4C4C4" stroke-width="1.4"/></svg>
<svg style="left:486px;top:688px" width="16" height="15"><path d="M4,3.5 H12 M9,0.8 L12,3.5 L9,6.2" fill="none" stroke="#C4C4C4" stroke-width="1"/><path d="M2,9 H13 M2,11.5 H13" stroke="#C4C4C4" stroke-width="1.4"/></svg>
<div class="a" style="left:509px;top:687px;width:1px;height:18px;background:#CCCEDB"></div>
<svg style="left:517px;top:688px" width="16" height="16"><path d="M1,1.5 L5.8,6.3 M5.8,1.5 L1,6.3" stroke="#E51400" stroke-width="1.1"/><path d="M7.5,1.8 H14.5 M7.5,4 H14.5 M7.5,6.2 H14.5 M1,9.8 H14.5 M1,12.6 H14.5" stroke="#1E1E1E" stroke-width="1"/></svg>
<div class="a" style="left:539px;top:687px;width:1px;height:18px;background:#CCCEDB"></div>
<svg style="left:547px;top:688px" width="18" height="16"><text x="0.5" y="6.3" font-size="7" font-weight="bold" font-family="Liberation Sans" fill="#1E1E1E">ab</text><text x="0.5" y="13" font-size="7" font-weight="bold" font-family="Liberation Sans" fill="#1E1E1E">c</text><path d="M7,11 H14.5 V5.5 H10.5 M9.5,8.8 L7,11 L9.5,13.2" fill="none" stroke="#1B6AC9" stroke-width="1.1"/></svg>
<div class="a" style="left:569px;top:687px;width:1px;height:18px;background:#CCCEDB"></div>
<svg style="left:577px;top:688px" width="16" height="16"><circle cx="8" cy="7.6" r="6.3" fill="#E6E6E6" stroke="#1E1E1E" stroke-width="1.2"/><path d="M7.6,3.8 V8.2 H11" fill="none" stroke="#1E1E1E" stroke-width="1.1"/></svg>
<div class="a" style="left:8px;top:709px;width:895px;height:69px;background:#E6E7E8;overflow:hidden">
<div class="t" style="left:12px;top:-5px;font-family:&quot;Liberation Mono&quot;,monospace;font-size:11.67px;line-height:15px;">> am start -a &quot;android.intent.action.MAIN&quot; -c &quot;android.intent.category.LAUNCHER&quot; -n &quot;Android.Android/crc64303dd3494ea349b2.Activity1&quot;</div>
<div class="t" style="left:12px;top:10px;font-family:&quot;Liberation Mono&quot;,monospace;font-size:11.67px;line-height:15px;">> Starting: Intent { act=android.intent.action.MAIN cat=[android.intent.category.LAUNCHER] cmp=Android.Android/crc64303dd3494ea349b2.Activity1 }</div>
<div class="t" style="left:12px;top:25px;font-family:&quot;Liberation Mono&quot;,monospace;font-size:11.67px;line-height:15px;"></div>
<div class="t" style="left:12px;top:40px;font-family:&quot;Liberation Mono&quot;,monospace;font-size:11.67px;line-height:15px;">Android application is running.</div>
</div>
<div class="a" style="left:903px;top:709px;width:19px;height:69px;background:#F5F5F5"></div>
<svg style="left:908px;top:714px" width="10" height="6"><path d="M0,5.5 L4.5,0.5 L9,5.5 Z" fill="#A0A2AE"/></svg>
<div class="a" style="left:907px;top:750px;width:11px;height:5px;background:#C2C3C9"></div>
<div class="a" style="left:903px;top:756px;width:19px;height:2px;background:#0E3ACB"></div>
<svg style="left:908px;top:767px" width="10" height="6"><path d="M0,0.5 L4.5,5.5 L9,0.5 Z" fill="#868999"/></svg>
<div class="a" style="left:8px;top:778px;width:914px;height:15px;background:#F5F5F5"></div>
<svg style="left:13px;top:780px" width="7" height="10"><path d="M6,0.5 L0.5,5 L6,9.5 Z" fill="#868999"/></svg>
<div class="a" style="left:25px;top:782px;width:342px;height:7px;background:#C2C3C9"></div>
<svg style="left:891px;top:780px" width="7" height="10"><path d="M0.5,0.5 L6,5 L0.5,9.5 Z" fill="#868999"/></svg>
<div class="a" style="left:282px;top:793px;width:50px;height:20px;background:#F5F5F5;border:1px solid #CCCEDB;border-top:none"></div>
<div class="t" style="left:13px;top:796px">Properties</div>
<div class="t" style="left:78px;top:796px">Package Manager Console</div>
<div class="t" style="left:230px;top:796px">Error List</div>
<div class="t" style="left:288px;top:796px;color:#0E70C0">Output</div>
</div>

<!-- WATERMARK -->
<div id="wm">
<div class="a" style="left:1121px;top:713px;width:219px;height:90px;background:rgba(197,197,197,0.8)"></div>
<div class="t" style="left:1140px;top:700px;font-size:81.4px;line-height:100px;color:#F3F3F3;transform-origin:0 0;transform:scaleX(0.98)">dir.by</div>
</div>
</body></html>
